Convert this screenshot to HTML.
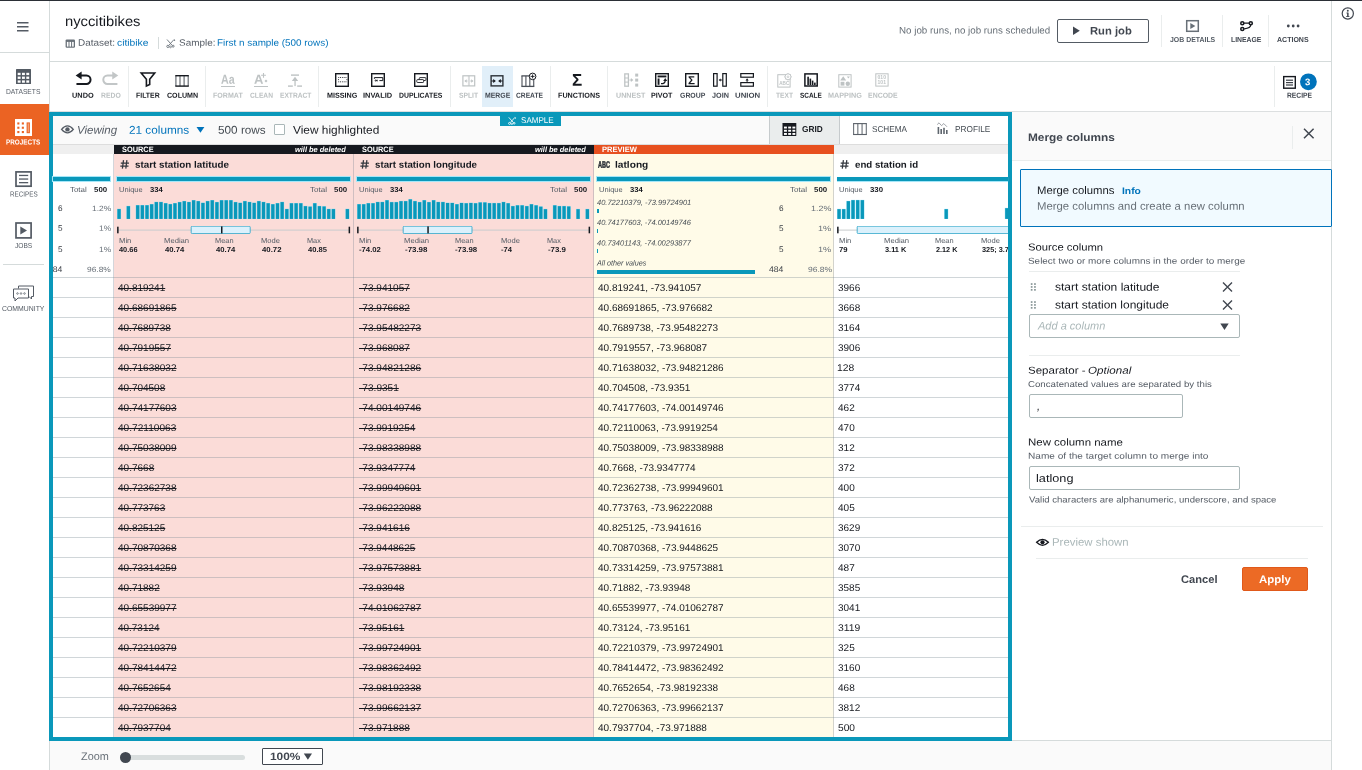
<!DOCTYPE html>
<html lang="en"><head><meta charset="utf-8"><title>nyccitibikes - AWS Glue DataBrew</title>
<style>
html,body{margin:0;padding:0}
body{width:1362px;height:770px;position:relative;overflow:hidden;background:#fff;font-family:'Liberation Sans', sans-serif;}
div,span,svg{position:absolute;box-sizing:border-box}
span{white-space:pre;transform-origin:0 0}
svg{overflow:visible}
#app{left:0;top:0;width:1362px;height:770px;background:#fff;will-change:transform;overflow:hidden}
</style></head>
<body>
<div id="app">
<div style="left:0px;top:0px;width:1362px;height:1px;background:#2b2f36;"></div>
<div style="left:49px;top:1px;width:1px;height:769px;background:#d5dbdb;"></div>
<div style="left:0px;top:52px;width:49px;height:1px;background:#d5dbdb;"></div>
<div style="left:50px;top:61px;width:1281px;height:1px;background:#d5dbdb;"></div>
<div style="left:50px;top:111px;width:1281px;height:1px;background:#dcdfe0;"></div>
<div style="left:1331px;top:1px;width:1px;height:769px;background:#d5dbdb;"></div>
<div style="left:50px;top:741px;width:1281px;height:29px;background:#fafafa;"></div>
<div style="left:50px;top:740px;width:1281px;height:1px;background:#d5dbdb;"></div>
<div style="left:1012px;top:112px;width:319px;height:48px;background:#fafafa;"></div>
<div style="left:1012px;top:160px;width:319px;height:1px;background:#eaeded;"></div>
<div style="left:49px;top:112px;width:963px;height:629px;background:#0a98ba;"></div>
<div style="left:53px;top:116px;width:955px;height:621px;background:#fff;"></div>
<div style="left:53px;top:116px;width:955px;height:28px;background:#fafafa;"></div>
<div style="left:53px;top:144px;width:955px;height:1px;background:#dddddd;"></div>
<div style="left:769px;top:116px;width:71px;height:28px;background:#eaeded;border-left:1px solid #c6cbcd;border-right:1px solid #c6cbcd;"></div>
<div style="left:840px;top:116px;width:168px;height:28px;background:#fff;"></div>
<div style="left:53px;top:145px;width:61px;height:9px;background:#efefef;"></div>
<div style="left:114px;top:145px;width:480px;height:9px;background:#16191f;"></div>
<div style="left:594px;top:145px;width:240px;height:9px;background:#e7501f;"></div>
<div style="left:834px;top:145px;width:174px;height:9px;background:#efefef;"></div>
<div style="left:114px;top:154px;width:480px;height:583px;background:#fbdcd8;"></div>
<div style="left:594px;top:154px;width:240px;height:583px;background:#fffbe8;"></div>
<div style="left:113px;top:154px;width:1px;height:583px;background:rgba(125,135,150,.34);"></div>
<div style="left:353px;top:154px;width:1px;height:583px;background:rgba(125,135,150,.34);"></div>
<div style="left:593px;top:154px;width:1px;height:583px;background:rgba(125,135,150,.34);"></div>
<div style="left:833px;top:154px;width:1px;height:583px;background:rgba(125,135,150,.34);"></div>
<div style="left:53px;top:277px;width:955px;height:1px;background:rgba(125,140,150,.36);"></div>
<div style="left:53px;top:297px;width:955px;height:1px;background:rgba(125,140,150,.36);"></div>
<div style="left:53px;top:317px;width:955px;height:1px;background:rgba(125,140,150,.36);"></div>
<div style="left:53px;top:337px;width:955px;height:1px;background:rgba(125,140,150,.36);"></div>
<div style="left:53px;top:357px;width:955px;height:1px;background:rgba(125,140,150,.36);"></div>
<div style="left:53px;top:377px;width:955px;height:1px;background:rgba(125,140,150,.36);"></div>
<div style="left:53px;top:397px;width:955px;height:1px;background:rgba(125,140,150,.36);"></div>
<div style="left:53px;top:417px;width:955px;height:1px;background:rgba(125,140,150,.36);"></div>
<div style="left:53px;top:437px;width:955px;height:1px;background:rgba(125,140,150,.36);"></div>
<div style="left:53px;top:457px;width:955px;height:1px;background:rgba(125,140,150,.36);"></div>
<div style="left:53px;top:477px;width:955px;height:1px;background:rgba(125,140,150,.36);"></div>
<div style="left:53px;top:497px;width:955px;height:1px;background:rgba(125,140,150,.36);"></div>
<div style="left:53px;top:517px;width:955px;height:1px;background:rgba(125,140,150,.36);"></div>
<div style="left:53px;top:537px;width:955px;height:1px;background:rgba(125,140,150,.36);"></div>
<div style="left:53px;top:557px;width:955px;height:1px;background:rgba(125,140,150,.36);"></div>
<div style="left:53px;top:577px;width:955px;height:1px;background:rgba(125,140,150,.36);"></div>
<div style="left:53px;top:597px;width:955px;height:1px;background:rgba(125,140,150,.36);"></div>
<div style="left:53px;top:617px;width:955px;height:1px;background:rgba(125,140,150,.36);"></div>
<div style="left:53px;top:637px;width:955px;height:1px;background:rgba(125,140,150,.36);"></div>
<div style="left:53px;top:657px;width:955px;height:1px;background:rgba(125,140,150,.36);"></div>
<div style="left:53px;top:677px;width:955px;height:1px;background:rgba(125,140,150,.36);"></div>
<div style="left:53px;top:697px;width:955px;height:1px;background:rgba(125,140,150,.36);"></div>
<div style="left:53px;top:717px;width:955px;height:1px;background:rgba(125,140,150,.36);"></div>
<div style="left:53px;top:177px;width:57px;height:4px;background:#0a98ba;box-shadow:0 0 0.5px 0.6px #a5e6f8;"></div>
<div style="left:117.25px;top:177px;width:232.75px;height:4px;background:#0a98ba;box-shadow:0 0 0.5px 0.6px #a5e6f8;"></div>
<div style="left:357.25px;top:177px;width:232.75px;height:4px;background:#0a98ba;box-shadow:0 0 0.5px 0.6px #a5e6f8;"></div>
<div style="left:597.25px;top:177px;width:232.75px;height:4px;background:#0a98ba;box-shadow:0 0 0.5px 0.6px #a5e6f8;"></div>
<div style="left:837.25px;top:177px;width:170.75px;height:4px;background:#0a98ba;box-shadow:0 -0.5px 0.6px 0 #a5e6f8,0 0.5px 0.6px 0 #a5e6f8;"></div>
<span style="left:64.55px;top:12px;font-size:14px;line-height:18px;color:#16191f;transform:matrix(1.0543,0.0005,0,1,0,0.00);">nyccitibikes</span>
<span style="left:78.20px;top:36px;font-size:9.3px;line-height:12px;color:#545b64;transform:matrix(1.0727,0.0005,0,1,0,0.80);">Dataset:</span>
<span style="left:117.47px;top:36px;font-size:9.3px;line-height:12px;color:#0073bb;transform:matrix(1.1081,0.0005,0,1,0,0.80);">citibike</span>
<div style="left:157.5px;top:37px;width:1px;height:12px;background:#d5dbdb;"></div>
<span style="left:178.87px;top:36px;font-size:9.3px;line-height:12px;color:#545b64;transform:matrix(1.0687,0.0005,0,1,0,0.80);">Sample:</span>
<span style="left:216.70px;top:36px;font-size:9.3px;line-height:12px;color:#0073bb;transform:matrix(1.0628,0.0005,0,1,0,0.80);">First n sample (500 rows)</span>
<span style="left:898.54px;top:23px;font-size:9.6px;line-height:13px;color:#687078;transform:matrix(1.0197,0.0005,0,1,0,0.40);">No job runs, no job runs scheduled</span>
<div style="left:1057px;top:19px;width:92px;height:24px;background:#fff;border:1px solid #545b64;border-radius:2px;"></div>
<span style="left:1090.03px;top:23px;font-size:11px;line-height:14px;color:#414750;font-weight:700;transform:matrix(1.0214,0.0005,0,1,0,0.50);">Run job</span>
<div style="left:1161px;top:14.5px;width:1px;height:32.5px;background:#eaeded;"></div>
<div style="left:1222px;top:14.5px;width:1px;height:32.5px;background:#eaeded;"></div>
<div style="left:1268px;top:14.5px;width:1px;height:32.5px;background:#eaeded;"></div>
<span style="left:1170.00px;top:33px;font-size:7.2px;line-height:11px;color:#545b64;font-weight:700;transform:matrix(0.9626,0.0005,0,1,0,0.90);">JOB DETAILS</span>
<span style="left:1230.77px;top:33px;font-size:7.2px;line-height:11px;color:#414750;font-weight:700;transform:matrix(0.9520,0.0005,0,1,0,0.90);">LINEAGE</span>
<span style="left:1277.26px;top:33px;font-size:7.2px;line-height:11px;color:#414750;font-weight:700;transform:matrix(0.9766,0.0005,0,1,0,0.90);">ACTIONS</span>
<div style="left:482.25px;top:66px;width:30.75px;height:41px;background:#e1eff9;"></div>
<div style="left:128px;top:66px;width:1px;height:41px;background:#eaeded;"></div>
<div style="left:205px;top:66px;width:1px;height:41px;background:#eaeded;"></div>
<div style="left:318px;top:66px;width:1px;height:41px;background:#eaeded;"></div>
<div style="left:450px;top:66px;width:1px;height:41px;background:#eaeded;"></div>
<div style="left:550px;top:66px;width:1px;height:41px;background:#eaeded;"></div>
<div style="left:607px;top:66px;width:1px;height:41px;background:#eaeded;"></div>
<div style="left:767px;top:66px;width:1px;height:41px;background:#eaeded;"></div>
<div style="left:1274px;top:66px;width:1px;height:41px;background:#eaeded;"></div>
<span style="left:72.24px;top:89px;font-size:7.2px;line-height:11px;color:#16191f;font-weight:700;transform:matrix(1.0244,0.0005,0,1,0,0.75);">UNDO</span>
<span style="left:100.53px;top:89px;font-size:7.2px;line-height:11px;color:#bcc1c2;font-weight:700;transform:matrix(0.9500,0.0005,0,1,0,0.75);">REDO</span>
<span style="left:136.42px;top:89px;font-size:7.2px;line-height:11px;color:#16191f;font-weight:700;transform:matrix(0.9625,0.0005,0,1,0,0.75);">FILTER</span>
<span style="left:166.65px;top:89px;font-size:7.2px;line-height:11px;color:#16191f;font-weight:700;transform:matrix(0.9871,0.0005,0,1,0,0.75);">COLUMN</span>
<span style="left:213.26px;top:89px;font-size:7.2px;line-height:11px;color:#bcc1c2;font-weight:700;transform:matrix(0.9832,0.0005,0,1,0,0.75);">FORMAT</span>
<span style="left:250.02px;top:89px;font-size:7.2px;line-height:11px;color:#bcc1c2;font-weight:700;transform:matrix(0.9271,0.0005,0,1,0,0.75);">CLEAN</span>
<span style="left:279.54px;top:89px;font-size:7.2px;line-height:11px;color:#bcc1c2;font-weight:700;transform:matrix(0.9254,0.0005,0,1,0,0.75);">EXTRACT</span>
<span style="left:327.25px;top:89px;font-size:7.2px;line-height:11px;color:#16191f;font-weight:700;transform:matrix(1.0000,0.0005,0,1,0,0.75);">MISSING</span>
<span style="left:363.48px;top:89px;font-size:7.2px;line-height:11px;color:#16191f;font-weight:700;transform:matrix(1.0364,0.0005,0,1,0,0.75);">INVALID</span>
<span style="left:399.27px;top:89px;font-size:7.2px;line-height:11px;color:#16191f;font-weight:700;transform:matrix(0.9553,0.0005,0,1,0,0.75);">DUPLICATES</span>
<span style="left:458.77px;top:89px;font-size:7.2px;line-height:11px;color:#bcc1c2;font-weight:700;transform:matrix(0.9383,0.0005,0,1,0,0.75);">SPLIT</span>
<span style="left:484.52px;top:89px;font-size:7.2px;line-height:11px;color:#414750;font-weight:700;transform:matrix(0.9612,0.0005,0,1,0,0.75);">MERGE</span>
<span style="left:515.77px;top:89px;font-size:7.2px;line-height:11px;color:#414750;font-weight:700;transform:matrix(0.9298,0.0005,0,1,0,0.75);">CREATE</span>
<span style="left:558.25px;top:89px;font-size:7.2px;line-height:11px;color:#16191f;font-weight:700;transform:matrix(1.0000,0.0005,0,1,0,0.75);">FUNCTIONS</span>
<span style="left:615.75px;top:89px;font-size:7.2px;line-height:11px;color:#bcc1c2;font-weight:700;transform:matrix(0.9914,0.0005,0,1,0,0.75);">UNNEST</span>
<span style="left:651.40px;top:89px;font-size:7.2px;line-height:11px;color:#16191f;font-weight:700;transform:matrix(0.9929,0.0005,0,1,0,0.75);">PIVOT</span>
<span style="left:679.76px;top:89px;font-size:7.2px;line-height:11px;color:#414750;font-weight:700;transform:matrix(0.9615,0.0005,0,1,0,0.75);">GROUP</span>
<span style="left:711.90px;top:89px;font-size:7.2px;line-height:11px;color:#414750;font-weight:700;transform:matrix(1.0062,0.0005,0,1,0,0.75);">JOIN</span>
<span style="left:734.71px;top:89px;font-size:7.2px;line-height:11px;color:#414750;font-weight:700;transform:matrix(1.0854,0.0005,0,1,0,0.75);">UNION</span>
<span style="left:775.60px;top:89px;font-size:7.2px;line-height:11px;color:#bcc1c2;font-weight:700;transform:matrix(0.9270,0.0005,0,1,0,0.75);">TEXT</span>
<span style="left:799.53px;top:89px;font-size:7.2px;line-height:11px;color:#16191f;font-weight:700;transform:matrix(0.8958,0.0005,0,1,0,0.75);">SCALE</span>
<span style="left:827.50px;top:89px;font-size:7.2px;line-height:11px;color:#bcc1c2;font-weight:700;transform:matrix(1.0076,0.0005,0,1,0,0.75);">MAPPING</span>
<span style="left:867.52px;top:89px;font-size:7.2px;line-height:11px;color:#bcc1c2;font-weight:700;transform:matrix(0.9667,0.0005,0,1,0,0.75);">ENCODE</span>
<span style="left:1287.23px;top:89px;font-size:7.2px;line-height:11px;color:#414750;font-weight:700;transform:matrix(0.9346,0.0005,0,1,0,0.75);">RECIPE</span>
<div style="left:0px;top:104px;width:49px;height:50.5px;background:#eb6323;"></div>
<span style="left:6.33px;top:85px;font-size:7.2px;line-height:11px;color:#545b64;transform:matrix(0.9333,0.0005,0,1,0,0.90);">DATASETS</span>
<span style="left:6.36px;top:136px;font-size:7.2px;line-height:11px;color:#fff;font-weight:700;transform:matrix(0.8842,0.0005,0,1,0,0.50);">PROJECTS</span>
<span style="left:9.56px;top:188px;font-size:7.2px;line-height:11px;color:#545b64;transform:matrix(0.8780,0.0005,0,1,0,0.60);">RECIPES</span>
<span style="left:15.20px;top:239px;font-size:7.2px;line-height:11px;color:#545b64;transform:matrix(0.9189,0.0005,0,1,0,0.90);">JOBS</span>
<div style="left:3px;top:263.5px;width:41px;height:1px;background:#d5dbdb;"></div>
<span style="left:2.26px;top:302px;font-size:7.2px;line-height:11px;color:#545b64;transform:matrix(0.9577,0.0005,0,1,0,0.90);">COMMUNITY</span>
<span style="left:77.48px;top:122px;font-size:11.3px;line-height:14px;color:#545b64;font-style:italic;transform:matrix(1.0196,0.0005,0,1,0,0.75);">Viewing</span>
<span style="left:129.48px;top:122px;font-size:11.3px;line-height:14px;color:#0073bb;transform:matrix(1.0421,0.0005,0,1,0,0.75);">21 columns</span>
<span style="left:218.23px;top:122px;font-size:11.3px;line-height:14px;color:#444b52;transform:matrix(1.0411,0.0005,0,1,0,0.75);">500 rows</span>
<div style="left:274px;top:124.4px;width:11.25px;height:10.6px;background:#fff;border:1px solid #aab7b8;border-radius:1px;"></div>
<span style="left:293.00px;top:122px;font-size:11.3px;line-height:14px;color:#16191f;transform:matrix(1.0521,0.0005,0,1,0,0.75);">View highlighted</span>
<div style="left:500.25px;top:116px;width:60.75px;height:10px;background:#0a98ba;"></div>
<span style="left:520.53px;top:113px;font-size:8.5px;line-height:12px;color:#fff;transform:matrix(0.9481,0.0005,0,1,0,0.90);">SAMPLE</span>
<span style="left:802.26px;top:122px;font-size:8.6px;line-height:12px;color:#16191f;font-weight:700;transform:matrix(0.9643,0.0005,0,1,0,0.90);">GRID</span>
<span style="left:872.27px;top:122px;font-size:8.6px;line-height:12px;color:#444b52;transform:matrix(0.9517,0.0005,0,1,0,0.90);">SCHEMA</span>
<span style="left:954.88px;top:122px;font-size:8.6px;line-height:12px;color:#444b52;transform:matrix(0.9622,0.0005,0,1,0,0.90);">PROFILE</span>
<span style="left:122.01px;top:143px;font-size:7.8px;line-height:11px;color:#fff;font-weight:700;transform:matrix(0.9470,0.0005,0,1,0,0.90);">SOURCE</span>
<span style="left:295.36px;top:143px;font-size:7.6px;line-height:11px;color:#fff;font-weight:700;font-style:italic;transform:matrix(0.9787,0.0005,0,1,0,0.90);">will be deleted</span>
<span style="left:362.01px;top:143px;font-size:7.8px;line-height:11px;color:#fff;font-weight:700;transform:matrix(0.9470,0.0005,0,1,0,0.90);">SOURCE</span>
<span style="left:535.36px;top:143px;font-size:7.6px;line-height:11px;color:#fff;font-weight:700;font-style:italic;transform:matrix(0.9787,0.0005,0,1,0,0.90);">will be deleted</span>
<span style="left:602.02px;top:143px;font-size:7.8px;line-height:11px;color:#fff;font-weight:700;transform:matrix(0.9690,0.0005,0,1,0,0.90);">PREVIEW</span>
<span style="left:134.99px;top:157px;font-size:9.5px;line-height:13px;color:#16191f;font-weight:700;transform:matrix(1.0360,0.0005,0,1,0,0.75);">start station latitude</span>
<span style="left:374.99px;top:157px;font-size:9.5px;line-height:13px;color:#16191f;font-weight:700;transform:matrix(1.0227,0.0005,0,1,0,0.75);">start station longitude</span>
<span style="left:614.60px;top:157px;font-size:9.5px;line-height:13px;color:#16191f;font-weight:700;transform:matrix(1.0706,0.0005,0,1,0,0.75);">latlong</span>
<span style="left:855.04px;top:157px;font-size:9.5px;line-height:13px;color:#16191f;font-weight:700;transform:matrix(1.0213,0.0005,0,1,0,0.75);">end station id</span>
<span style="left:597.85px;top:157px;font-size:9.4px;line-height:13px;color:#2a2f36;font-weight:700;transform:matrix(0.5949,0.0005,0,1,0,0.75);-webkit-text-stroke:0.5px #2a2f36;">ABC</span>
<span style="left:69.97px;top:183px;font-size:7.2px;line-height:11px;color:#545b64;transform:matrix(1.1034,0.0005,0,1,0,0.90);">Total</span>
<span style="left:94.32px;top:183px;font-size:7.2px;line-height:11px;color:#16191f;font-weight:700;transform:matrix(1.1000,0.0005,0,1,0,0.90);">500</span>
<span style="left:58.00px;top:203px;font-size:8.2px;line-height:11px;color:#3a3f46;transform:matrix(1.0000,0.0005,0,1,0,0.00);">6</span>
<span style="left:92.20px;top:203px;font-size:7.6px;line-height:11px;color:#687078;transform:matrix(1.1061,0.0005,0,1,0,0.00);">1.2%</span>
<span style="left:58.25px;top:222px;font-size:8.2px;line-height:11px;color:#3a3f46;transform:matrix(1.0000,0.0005,0,1,0,0.80);">5</span>
<span style="left:99.20px;top:222px;font-size:7.6px;line-height:11px;color:#687078;transform:matrix(1.0976,0.0005,0,1,0,0.80);">1%</span>
<span style="left:58.25px;top:243px;font-size:8.2px;line-height:11px;color:#3a3f46;transform:matrix(1.0000,0.0005,0,1,0,0.90);">5</span>
<span style="left:99.20px;top:243px;font-size:7.6px;line-height:11px;color:#687078;transform:matrix(1.0976,0.0005,0,1,0,0.90);">1%</span>
<div style="left:53px;top:262px;width:13px;height:14px;overflow:hidden"><span style="left:-4.56px;top:1px;font-size:8.2px;line-height:11px;color:#3a3f46;transform:matrix(1.0566,0.0005,0,1,0,0.90);">484</span></div>
<span style="left:87.47px;top:263px;font-size:7.6px;line-height:11px;color:#687078;transform:matrix(1.1071,0.0005,0,1,0,0.90);">96.8%</span>
<span style="left:118.88px;top:183px;font-size:7.2px;line-height:11px;color:#545b64;transform:matrix(1.0386,0.0005,0,1,0,0.90);">Unique</span>
<span style="left:150.33px;top:183px;font-size:7.2px;line-height:11px;color:#16191f;font-weight:700;transform:matrix(1.0638,0.0005,0,1,0,0.90);">334</span>
<span style="left:310.22px;top:183px;font-size:7.2px;line-height:11px;color:#545b64;transform:matrix(1.1207,0.0005,0,1,0,0.90);">Total</span>
<span style="left:334.23px;top:183px;font-size:7.2px;line-height:11px;color:#16191f;font-weight:700;transform:matrix(1.1000,0.0005,0,1,0,0.90);">500</span>
<svg style="left:114px;top:199.1px;overflow:hidden;" width="240" height="20" viewBox="0 0 240 20"><rect x="3.10" y="9.80" width="3.9" height="10.10" fill="#7fd6ee"/><rect x="3.45" y="10.10" width="3.2" height="9.80" fill="#0a98ba"/><rect x="12.42" y="6.90" width="3.9" height="13.00" fill="#7fd6ee"/><rect x="12.77" y="7.20" width="3.2" height="12.70" fill="#0a98ba"/><rect x="21.74" y="6.00" width="3.9" height="13.90" fill="#7fd6ee"/><rect x="22.09" y="6.30" width="3.2" height="13.60" fill="#0a98ba"/><rect x="26.40" y="6.00" width="3.9" height="13.90" fill="#7fd6ee"/><rect x="26.75" y="6.30" width="3.2" height="13.60" fill="#0a98ba"/><rect x="31.06" y="6.00" width="3.9" height="13.90" fill="#7fd6ee"/><rect x="31.41" y="6.30" width="3.2" height="13.60" fill="#0a98ba"/><rect x="35.72" y="5.00" width="3.9" height="14.90" fill="#7fd6ee"/><rect x="36.07" y="5.30" width="3.2" height="14.60" fill="#0a98ba"/><rect x="40.38" y="2.80" width="3.9" height="17.10" fill="#7fd6ee"/><rect x="40.73" y="3.10" width="3.2" height="16.80" fill="#0a98ba"/><rect x="45.04" y="2.80" width="3.9" height="17.10" fill="#7fd6ee"/><rect x="45.39" y="3.10" width="3.2" height="16.80" fill="#0a98ba"/><rect x="49.70" y="4.00" width="3.9" height="15.90" fill="#7fd6ee"/><rect x="50.05" y="4.30" width="3.2" height="15.60" fill="#0a98ba"/><rect x="54.36" y="4.90" width="3.9" height="15.00" fill="#7fd6ee"/><rect x="54.71" y="5.20" width="3.2" height="14.70" fill="#0a98ba"/><rect x="59.02" y="4.00" width="3.9" height="15.90" fill="#7fd6ee"/><rect x="59.37" y="4.30" width="3.2" height="15.60" fill="#0a98ba"/><rect x="63.68" y="2.90" width="3.9" height="17.00" fill="#7fd6ee"/><rect x="64.03" y="3.20" width="3.2" height="16.70" fill="#0a98ba"/><rect x="68.34" y="1.90" width="3.9" height="18.00" fill="#7fd6ee"/><rect x="68.69" y="2.20" width="3.2" height="17.70" fill="#0a98ba"/><rect x="73.00" y="2.80" width="3.9" height="17.10" fill="#7fd6ee"/><rect x="73.35" y="3.10" width="3.2" height="16.80" fill="#0a98ba"/><rect x="77.66" y="1.00" width="3.9" height="18.90" fill="#7fd6ee"/><rect x="78.01" y="1.30" width="3.2" height="18.60" fill="#0a98ba"/><rect x="82.32" y="1.90" width="3.9" height="18.00" fill="#7fd6ee"/><rect x="82.67" y="2.20" width="3.2" height="17.70" fill="#0a98ba"/><rect x="86.98" y="3.65" width="3.9" height="16.25" fill="#7fd6ee"/><rect x="87.33" y="3.95" width="3.2" height="15.95" fill="#0a98ba"/><rect x="91.64" y="1.90" width="3.9" height="18.00" fill="#7fd6ee"/><rect x="91.99" y="2.20" width="3.2" height="17.70" fill="#0a98ba"/><rect x="96.30" y="1.00" width="3.9" height="18.90" fill="#7fd6ee"/><rect x="96.65" y="1.30" width="3.2" height="18.60" fill="#0a98ba"/><rect x="100.96" y="2.90" width="3.9" height="17.00" fill="#7fd6ee"/><rect x="101.31" y="3.20" width="3.2" height="16.70" fill="#0a98ba"/><rect x="105.62" y="1.00" width="3.9" height="18.90" fill="#7fd6ee"/><rect x="105.97" y="1.30" width="3.2" height="18.60" fill="#0a98ba"/><rect x="110.28" y="1.00" width="3.9" height="18.90" fill="#7fd6ee"/><rect x="110.63" y="1.30" width="3.2" height="18.60" fill="#0a98ba"/><rect x="114.94" y="1.00" width="3.9" height="18.90" fill="#7fd6ee"/><rect x="115.29" y="1.30" width="3.2" height="18.60" fill="#0a98ba"/><rect x="119.60" y="2.90" width="3.9" height="17.00" fill="#7fd6ee"/><rect x="119.95" y="3.20" width="3.2" height="16.70" fill="#0a98ba"/><rect x="124.26" y="3.65" width="3.9" height="16.25" fill="#7fd6ee"/><rect x="124.61" y="3.95" width="3.2" height="15.95" fill="#0a98ba"/><rect x="128.92" y="1.90" width="3.9" height="18.00" fill="#7fd6ee"/><rect x="129.27" y="2.20" width="3.2" height="17.70" fill="#0a98ba"/><rect x="133.58" y="2.80" width="3.9" height="17.10" fill="#7fd6ee"/><rect x="133.93" y="3.10" width="3.2" height="16.80" fill="#0a98ba"/><rect x="138.24" y="3.65" width="3.9" height="16.25" fill="#7fd6ee"/><rect x="138.59" y="3.95" width="3.2" height="15.95" fill="#0a98ba"/><rect x="142.90" y="1.90" width="3.9" height="18.00" fill="#7fd6ee"/><rect x="143.25" y="2.20" width="3.2" height="17.70" fill="#0a98ba"/><rect x="147.56" y="2.80" width="3.9" height="17.10" fill="#7fd6ee"/><rect x="147.91" y="3.10" width="3.2" height="16.80" fill="#0a98ba"/><rect x="152.22" y="4.00" width="3.9" height="15.90" fill="#7fd6ee"/><rect x="152.57" y="4.30" width="3.2" height="15.60" fill="#0a98ba"/><rect x="156.88" y="5.00" width="3.9" height="14.90" fill="#7fd6ee"/><rect x="157.23" y="5.30" width="3.2" height="14.60" fill="#0a98ba"/><rect x="161.54" y="4.00" width="3.9" height="15.90" fill="#7fd6ee"/><rect x="161.89" y="4.30" width="3.2" height="15.60" fill="#0a98ba"/><rect x="166.20" y="2.80" width="3.9" height="17.10" fill="#7fd6ee"/><rect x="166.55" y="3.10" width="3.2" height="16.80" fill="#0a98ba"/><rect x="170.86" y="9.80" width="3.9" height="10.10" fill="#7fd6ee"/><rect x="171.21" y="10.10" width="3.2" height="9.80" fill="#0a98ba"/><rect x="175.52" y="4.00" width="3.9" height="15.90" fill="#7fd6ee"/><rect x="175.87" y="4.30" width="3.2" height="15.60" fill="#0a98ba"/><rect x="180.18" y="4.00" width="3.9" height="15.90" fill="#7fd6ee"/><rect x="180.53" y="4.30" width="3.2" height="15.60" fill="#0a98ba"/><rect x="184.84" y="4.00" width="3.9" height="15.90" fill="#7fd6ee"/><rect x="185.19" y="4.30" width="3.2" height="15.60" fill="#0a98ba"/><rect x="189.50" y="6.90" width="3.9" height="13.00" fill="#7fd6ee"/><rect x="189.85" y="7.20" width="3.2" height="12.70" fill="#0a98ba"/><rect x="194.16" y="7.40" width="3.9" height="12.50" fill="#7fd6ee"/><rect x="194.51" y="7.70" width="3.2" height="12.20" fill="#0a98ba"/><rect x="198.82" y="4.00" width="3.9" height="15.90" fill="#7fd6ee"/><rect x="199.17" y="4.30" width="3.2" height="15.60" fill="#0a98ba"/><rect x="203.48" y="6.90" width="3.9" height="13.00" fill="#7fd6ee"/><rect x="203.83" y="7.20" width="3.2" height="12.70" fill="#0a98ba"/><rect x="208.14" y="7.20" width="3.9" height="12.70" fill="#7fd6ee"/><rect x="208.49" y="7.50" width="3.2" height="12.40" fill="#0a98ba"/><rect x="212.80" y="9.80" width="3.9" height="10.10" fill="#7fd6ee"/><rect x="213.15" y="10.10" width="3.2" height="9.80" fill="#0a98ba"/><rect x="217.46" y="9.80" width="3.9" height="10.10" fill="#7fd6ee"/><rect x="217.81" y="10.10" width="3.2" height="9.80" fill="#0a98ba"/><rect x="231.44" y="9.80" width="3.9" height="10.10" fill="#7fd6ee"/><rect x="231.79" y="10.10" width="3.2" height="9.80" fill="#0a98ba"/></svg>
<svg style="left:114px;top:226.2px;overflow:hidden;" width="240" height="8" viewBox="0 0 240 8"><rect x="3.3" y="3.6" width="231.7" height="1" fill="#c9cccd"/><rect x="3.1" y="0.7" width="1.5" height="6.6" fill="#16191f"/><rect x="234.6" y="0.7" width="1.5" height="6.6" fill="#16191f"/><rect x="77.2" y="0.2" width="59" height="7.4" rx="1" fill="#dbf1fc" stroke="#35a9cc" stroke-width="0.9"/><rect x="107" y="0.4" width="1.5" height="7" fill="#16191f"/></svg>
<span style="left:118.72px;top:235px;font-size:7.2px;line-height:11px;color:#545b64;transform:matrix(1.0698,0.0005,0,1,0,0.00);">Min</span>
<span style="left:119.25px;top:244px;font-size:7.2px;line-height:11px;color:#16191f;font-weight:700;transform:matrix(1.0282,0.0005,0,1,0,0.00);">40.66</span>
<span style="left:164.47px;top:235px;font-size:7.2px;line-height:11px;color:#545b64;transform:matrix(1.0659,0.0005,0,1,0,0.00);">Median</span>
<span style="left:165.00px;top:244px;font-size:7.2px;line-height:11px;color:#16191f;font-weight:700;transform:matrix(1.0694,0.0005,0,1,0,0.00);">40.74</span>
<span style="left:215.24px;top:235px;font-size:7.2px;line-height:11px;color:#545b64;transform:matrix(1.0294,0.0005,0,1,0,0.00);">Mean</span>
<span style="left:215.75px;top:244px;font-size:7.2px;line-height:11px;color:#16191f;font-weight:700;transform:matrix(1.0694,0.0005,0,1,0,0.00);">40.74</span>
<span style="left:261.22px;top:235px;font-size:7.2px;line-height:11px;color:#545b64;transform:matrix(1.0580,0.0005,0,1,0,0.00);">Mode</span>
<span style="left:261.75px;top:244px;font-size:7.2px;line-height:11px;color:#16191f;font-weight:700;transform:matrix(1.0845,0.0005,0,1,0,0.00);">40.72</span>
<span style="left:307.49px;top:235px;font-size:7.2px;line-height:11px;color:#545b64;transform:matrix(1.0192,0.0005,0,1,0,0.00);">Max</span>
<span style="left:308.00px;top:244px;font-size:7.2px;line-height:11px;color:#16191f;font-weight:700;transform:matrix(1.0563,0.0005,0,1,0,0.00);">40.85</span>
<span style="left:358.88px;top:183px;font-size:7.2px;line-height:11px;color:#545b64;transform:matrix(1.0386,0.0005,0,1,0,0.90);">Unique</span>
<span style="left:390.33px;top:183px;font-size:7.2px;line-height:11px;color:#16191f;font-weight:700;transform:matrix(1.0638,0.0005,0,1,0,0.90);">334</span>
<span style="left:550.22px;top:183px;font-size:7.2px;line-height:11px;color:#545b64;transform:matrix(1.1207,0.0005,0,1,0,0.90);">Total</span>
<span style="left:574.23px;top:183px;font-size:7.2px;line-height:11px;color:#16191f;font-weight:700;transform:matrix(1.1000,0.0005,0,1,0,0.90);">500</span>
<svg style="left:354px;top:199.1px;overflow:hidden;" width="240" height="20" viewBox="0 0 240 20"><rect x="3.10" y="5.00" width="3.9" height="14.90" fill="#7fd6ee"/><rect x="3.45" y="5.30" width="3.2" height="14.60" fill="#0a98ba"/><rect x="7.76" y="5.00" width="3.9" height="14.90" fill="#7fd6ee"/><rect x="8.11" y="5.30" width="3.2" height="14.60" fill="#0a98ba"/><rect x="12.42" y="4.00" width="3.9" height="15.90" fill="#7fd6ee"/><rect x="12.77" y="4.30" width="3.2" height="15.60" fill="#0a98ba"/><rect x="17.08" y="4.00" width="3.9" height="15.90" fill="#7fd6ee"/><rect x="17.43" y="4.30" width="3.2" height="15.60" fill="#0a98ba"/><rect x="21.74" y="2.80" width="3.9" height="17.10" fill="#7fd6ee"/><rect x="22.09" y="3.10" width="3.2" height="16.80" fill="#0a98ba"/><rect x="26.40" y="2.80" width="3.9" height="17.10" fill="#7fd6ee"/><rect x="26.75" y="3.10" width="3.2" height="16.80" fill="#0a98ba"/><rect x="31.06" y="1.00" width="3.9" height="18.90" fill="#7fd6ee"/><rect x="31.41" y="1.30" width="3.2" height="18.60" fill="#0a98ba"/><rect x="35.72" y="2.90" width="3.9" height="17.00" fill="#7fd6ee"/><rect x="36.07" y="3.20" width="3.2" height="16.70" fill="#0a98ba"/><rect x="40.38" y="2.90" width="3.9" height="17.00" fill="#7fd6ee"/><rect x="40.73" y="3.20" width="3.2" height="16.70" fill="#0a98ba"/><rect x="45.04" y="1.90" width="3.9" height="18.00" fill="#7fd6ee"/><rect x="45.39" y="2.20" width="3.2" height="17.70" fill="#0a98ba"/><rect x="49.70" y="1.90" width="3.9" height="18.00" fill="#7fd6ee"/><rect x="50.05" y="2.20" width="3.2" height="17.70" fill="#0a98ba"/><rect x="54.36" y="0.10" width="3.9" height="19.80" fill="#7fd6ee"/><rect x="54.71" y="0.40" width="3.2" height="19.50" fill="#0a98ba"/><rect x="59.02" y="1.90" width="3.9" height="18.00" fill="#7fd6ee"/><rect x="59.37" y="2.20" width="3.2" height="17.70" fill="#0a98ba"/><rect x="63.68" y="2.90" width="3.9" height="17.00" fill="#7fd6ee"/><rect x="64.03" y="3.20" width="3.2" height="16.70" fill="#0a98ba"/><rect x="68.34" y="1.00" width="3.9" height="18.90" fill="#7fd6ee"/><rect x="68.69" y="1.30" width="3.2" height="18.60" fill="#0a98ba"/><rect x="73.00" y="2.90" width="3.9" height="17.00" fill="#7fd6ee"/><rect x="73.35" y="3.20" width="3.2" height="16.70" fill="#0a98ba"/><rect x="77.66" y="1.00" width="3.9" height="18.90" fill="#7fd6ee"/><rect x="78.01" y="1.30" width="3.2" height="18.60" fill="#0a98ba"/><rect x="82.32" y="2.80" width="3.9" height="17.10" fill="#7fd6ee"/><rect x="82.67" y="3.10" width="3.2" height="16.80" fill="#0a98ba"/><rect x="86.98" y="2.80" width="3.9" height="17.10" fill="#7fd6ee"/><rect x="87.33" y="3.10" width="3.2" height="16.80" fill="#0a98ba"/><rect x="91.64" y="3.70" width="3.9" height="16.20" fill="#7fd6ee"/><rect x="91.99" y="4.00" width="3.2" height="15.90" fill="#0a98ba"/><rect x="96.30" y="3.70" width="3.9" height="16.20" fill="#7fd6ee"/><rect x="96.65" y="4.00" width="3.2" height="15.90" fill="#0a98ba"/><rect x="100.96" y="5.00" width="3.9" height="14.90" fill="#7fd6ee"/><rect x="101.31" y="5.30" width="3.2" height="14.60" fill="#0a98ba"/><rect x="105.62" y="3.70" width="3.9" height="16.20" fill="#7fd6ee"/><rect x="105.97" y="4.00" width="3.2" height="15.90" fill="#0a98ba"/><rect x="110.28" y="4.00" width="3.9" height="15.90" fill="#7fd6ee"/><rect x="110.63" y="4.30" width="3.2" height="15.60" fill="#0a98ba"/><rect x="114.94" y="3.70" width="3.9" height="16.20" fill="#7fd6ee"/><rect x="115.29" y="4.00" width="3.2" height="15.90" fill="#0a98ba"/><rect x="119.60" y="4.00" width="3.9" height="15.90" fill="#7fd6ee"/><rect x="119.95" y="4.30" width="3.2" height="15.60" fill="#0a98ba"/><rect x="124.26" y="3.20" width="3.9" height="16.70" fill="#7fd6ee"/><rect x="124.61" y="3.50" width="3.2" height="16.40" fill="#0a98ba"/><rect x="128.92" y="3.20" width="3.9" height="16.70" fill="#7fd6ee"/><rect x="129.27" y="3.50" width="3.2" height="16.40" fill="#0a98ba"/><rect x="133.58" y="3.90" width="3.9" height="16.00" fill="#7fd6ee"/><rect x="133.93" y="4.20" width="3.2" height="15.70" fill="#0a98ba"/><rect x="138.24" y="3.90" width="3.9" height="16.00" fill="#7fd6ee"/><rect x="138.59" y="4.20" width="3.2" height="15.70" fill="#0a98ba"/><rect x="142.90" y="3.90" width="3.9" height="16.00" fill="#7fd6ee"/><rect x="143.25" y="4.20" width="3.2" height="15.70" fill="#0a98ba"/><rect x="147.56" y="2.80" width="3.9" height="17.10" fill="#7fd6ee"/><rect x="147.91" y="3.10" width="3.2" height="16.80" fill="#0a98ba"/><rect x="152.22" y="4.00" width="3.9" height="15.90" fill="#7fd6ee"/><rect x="152.57" y="4.30" width="3.2" height="15.60" fill="#0a98ba"/><rect x="156.88" y="6.90" width="3.9" height="13.00" fill="#7fd6ee"/><rect x="157.23" y="7.20" width="3.2" height="12.70" fill="#0a98ba"/><rect x="161.54" y="6.10" width="3.9" height="13.80" fill="#7fd6ee"/><rect x="161.89" y="6.40" width="3.2" height="13.50" fill="#0a98ba"/><rect x="166.20" y="6.10" width="3.9" height="13.80" fill="#7fd6ee"/><rect x="166.55" y="6.40" width="3.2" height="13.50" fill="#0a98ba"/><rect x="170.86" y="6.90" width="3.9" height="13.00" fill="#7fd6ee"/><rect x="171.21" y="7.20" width="3.2" height="12.70" fill="#0a98ba"/><rect x="175.52" y="5.00" width="3.9" height="14.90" fill="#7fd6ee"/><rect x="175.87" y="5.30" width="3.2" height="14.60" fill="#0a98ba"/><rect x="180.18" y="6.10" width="3.9" height="13.80" fill="#7fd6ee"/><rect x="180.53" y="6.40" width="3.2" height="13.50" fill="#0a98ba"/><rect x="184.84" y="7.40" width="3.9" height="12.50" fill="#7fd6ee"/><rect x="185.19" y="7.70" width="3.2" height="12.20" fill="#0a98ba"/><rect x="189.50" y="9.90" width="3.9" height="10.00" fill="#7fd6ee"/><rect x="189.85" y="10.20" width="3.2" height="9.70" fill="#0a98ba"/><rect x="198.82" y="6.10" width="3.9" height="13.80" fill="#7fd6ee"/><rect x="199.17" y="6.40" width="3.2" height="13.50" fill="#0a98ba"/><rect x="203.48" y="6.90" width="3.9" height="13.00" fill="#7fd6ee"/><rect x="203.83" y="7.20" width="3.2" height="12.70" fill="#0a98ba"/><rect x="208.14" y="6.90" width="3.9" height="13.00" fill="#7fd6ee"/><rect x="208.49" y="7.20" width="3.2" height="12.70" fill="#0a98ba"/><rect x="212.80" y="7.20" width="3.9" height="12.70" fill="#7fd6ee"/><rect x="213.15" y="7.50" width="3.2" height="12.40" fill="#0a98ba"/><rect x="222.12" y="9.90" width="3.9" height="10.00" fill="#7fd6ee"/><rect x="222.47" y="10.20" width="3.2" height="9.70" fill="#0a98ba"/><rect x="231.44" y="9.90" width="3.9" height="10.00" fill="#7fd6ee"/><rect x="231.79" y="10.20" width="3.2" height="9.70" fill="#0a98ba"/></svg>
<svg style="left:354px;top:226.2px;overflow:hidden;" width="240" height="8" viewBox="0 0 240 8"><rect x="3.3" y="3.6" width="231.7" height="1" fill="#c9cccd"/><rect x="3.1" y="0.7" width="1.5" height="6.6" fill="#16191f"/><rect x="234.6" y="0.7" width="1.5" height="6.6" fill="#16191f"/><rect x="49.2" y="0.2" width="68.8" height="7.4" rx="1" fill="#dbf1fc" stroke="#35a9cc" stroke-width="0.9"/><rect x="73.3" y="0.4" width="1.5" height="7" fill="#16191f"/></svg>
<span style="left:358.72px;top:235px;font-size:7.2px;line-height:11px;color:#545b64;transform:matrix(1.0698,0.0005,0,1,0,0.00);">Min</span>
<span style="left:358.98px;top:244px;font-size:7.2px;line-height:11px;color:#16191f;font-weight:700;transform:matrix(1.0750,0.0005,0,1,0,0.00);">-74.02</span>
<span style="left:404.47px;top:235px;font-size:7.2px;line-height:11px;color:#545b64;transform:matrix(1.0659,0.0005,0,1,0,0.00);">Median</span>
<span style="left:404.73px;top:244px;font-size:7.2px;line-height:11px;color:#16191f;font-weight:700;transform:matrix(1.1000,0.0005,0,1,0,0.00);">-73.98</span>
<span style="left:455.24px;top:235px;font-size:7.2px;line-height:11px;color:#545b64;transform:matrix(1.0294,0.0005,0,1,0,0.00);">Mean</span>
<span style="left:455.48px;top:244px;font-size:7.2px;line-height:11px;color:#16191f;font-weight:700;transform:matrix(1.0875,0.0005,0,1,0,0.00);">-73.98</span>
<span style="left:501.22px;top:235px;font-size:7.2px;line-height:11px;color:#545b64;transform:matrix(1.0580,0.0005,0,1,0,0.00);">Mode</span>
<span style="left:501.49px;top:244px;font-size:7.2px;line-height:11px;color:#16191f;font-weight:700;transform:matrix(1.0488,0.0005,0,1,0,0.00);">-74</span>
<span style="left:547.49px;top:235px;font-size:7.2px;line-height:11px;color:#545b64;transform:matrix(1.0192,0.0005,0,1,0,0.00);">Max</span>
<span style="left:547.73px;top:244px;font-size:7.2px;line-height:11px;color:#16191f;font-weight:700;transform:matrix(1.0938,0.0005,0,1,0,0.00);">-73.9</span>
<span style="left:838.88px;top:183px;font-size:7.2px;line-height:11px;color:#545b64;transform:matrix(1.0386,0.0005,0,1,0,0.90);">Unique</span>
<span style="left:870.33px;top:183px;font-size:7.2px;line-height:11px;color:#16191f;font-weight:700;transform:matrix(1.0870,0.0005,0,1,0,0.90);">330</span>
<svg style="left:834px;top:199.1px;overflow:hidden;" width="174" height="20" viewBox="0 0 174 20"><rect x="3.10" y="9.90" width="3.9" height="10.00" fill="#7fd6ee"/><rect x="3.45" y="10.20" width="3.2" height="9.70" fill="#0a98ba"/><rect x="7.76" y="9.90" width="3.9" height="10.00" fill="#7fd6ee"/><rect x="8.11" y="10.20" width="3.2" height="9.70" fill="#0a98ba"/><rect x="12.42" y="1.90" width="3.9" height="18.00" fill="#7fd6ee"/><rect x="12.77" y="2.20" width="3.2" height="17.70" fill="#0a98ba"/><rect x="17.08" y="0.90" width="3.9" height="19.00" fill="#7fd6ee"/><rect x="17.43" y="1.20" width="3.2" height="18.70" fill="#0a98ba"/><rect x="21.74" y="0.90" width="3.9" height="19.00" fill="#7fd6ee"/><rect x="22.09" y="1.20" width="3.2" height="18.70" fill="#0a98ba"/><rect x="26.40" y="0.90" width="3.9" height="19.00" fill="#7fd6ee"/><rect x="26.75" y="1.20" width="3.2" height="18.70" fill="#0a98ba"/><rect x="110.28" y="9.90" width="3.9" height="10.00" fill="#7fd6ee"/><rect x="110.63" y="10.20" width="3.2" height="9.70" fill="#0a98ba"/><rect x="170.86" y="8.90" width="3.9" height="11.00" fill="#7fd6ee"/><rect x="171.21" y="9.20" width="3.2" height="10.70" fill="#0a98ba"/></svg>
<svg style="left:834px;top:226.2px;overflow:hidden;" width="174" height="8" viewBox="0 0 174 8"><rect x="3.3" y="3.6" width="174" height="1" fill="#c9cccd"/><rect x="3.1" y="0.7" width="1.5" height="6.6" fill="#16191f"/><rect x="23.2" y="0.2" width="162.8" height="7.4" rx="1" fill="#dbf1fc" stroke="#35a9cc" stroke-width="0.9"/></svg>
<span style="left:838.72px;top:235px;font-size:7.2px;line-height:11px;color:#545b64;transform:matrix(1.0698,0.0005,0,1,0,0.00);">Min</span>
<span style="left:838.98px;top:244px;font-size:7.2px;line-height:11px;color:#16191f;font-weight:700;transform:matrix(1.0667,0.0005,0,1,0,0.00);">79</span>
<span style="left:884.47px;top:235px;font-size:7.2px;line-height:11px;color:#545b64;transform:matrix(1.0659,0.0005,0,1,0,0.00);">Median</span>
<span style="left:884.74px;top:244px;font-size:7.2px;line-height:11px;color:#16191f;font-weight:700;transform:matrix(1.0244,0.0005,0,1,0,0.00);">3.11 K</span>
<span style="left:935.24px;top:235px;font-size:7.2px;line-height:11px;color:#545b64;transform:matrix(1.0294,0.0005,0,1,0,0.00);">Mean</span>
<span style="left:935.50px;top:244px;font-size:7.2px;line-height:11px;color:#16191f;font-weight:700;transform:matrix(1.0120,0.0005,0,1,0,0.00);">2.12 K</span>
<span style="left:981.22px;top:235px;font-size:7.2px;line-height:11px;color:#545b64;transform:matrix(1.0580,0.0005,0,1,0,0.00);">Mode</span>
<div style="left:980px;top:244px;width:28px;height:12px;overflow:hidden"><span style="left:1.50px;top:0px;font-size:7.2px;line-height:11px;color:#16191f;font-weight:700;transform:matrix(1.0167,0.0005,0,1,0,0.00);">325; 3.73</span></div>
<span style="left:598.88px;top:183px;font-size:7.2px;line-height:11px;color:#545b64;transform:matrix(1.0386,0.0005,0,1,0,0.90);">Unique</span>
<span style="left:630.33px;top:183px;font-size:7.2px;line-height:11px;color:#16191f;font-weight:700;transform:matrix(1.0638,0.0005,0,1,0,0.90);">334</span>
<span style="left:790.22px;top:183px;font-size:7.2px;line-height:11px;color:#545b64;transform:matrix(1.1207,0.0005,0,1,0,0.90);">Total</span>
<span style="left:814.23px;top:183px;font-size:7.2px;line-height:11px;color:#16191f;font-weight:700;transform:matrix(1.1000,0.0005,0,1,0,0.90);">500</span>
<span style="left:597.00px;top:197px;font-size:7.6px;line-height:11px;color:#444b52;font-style:italic;transform:matrix(0.9879,0.0005,0,1,0,0.00);">40.72210379, -73.99724901</span>
<span style="left:597.00px;top:217px;font-size:7.6px;line-height:11px;color:#444b52;font-style:italic;transform:matrix(0.9843,0.0005,0,1,0,0.00);">40.74177603, -74.00149746</span>
<span style="left:597.00px;top:237px;font-size:7.6px;line-height:11px;color:#444b52;font-style:italic;transform:matrix(0.9895,0.0005,0,1,0,0.40);">40.73401143, -74.00293877</span>
<span style="left:597.24px;top:257px;font-size:7.6px;line-height:11px;color:#444b52;font-style:italic;transform:matrix(0.9500,0.0005,0,1,0,0.40);">All other values</span>
<div style="left:597px;top:209px;width:2px;height:4px;background:#0a98ba;"></div>
<div style="left:597px;top:229px;width:1.4px;height:4px;background:#0a98ba;"></div>
<div style="left:597px;top:249px;width:1.4px;height:4px;background:#0a98ba;"></div>
<div style="left:597px;top:269.5px;width:158px;height:4px;background:#0a98ba;"></div>
<span style="left:778.75px;top:203px;font-size:8.2px;line-height:11px;color:#3a3f46;transform:matrix(1.0000,0.0005,0,1,0,0.00);">6</span>
<span style="left:811.41px;top:203px;font-size:7.6px;line-height:11px;color:#687078;transform:matrix(1.1758,0.0005,0,1,0,0.00);">1.2%</span>
<span style="left:778.75px;top:223px;font-size:8.2px;line-height:11px;color:#3a3f46;transform:matrix(1.0000,0.0005,0,1,0,0.00);">5</span>
<span style="left:818.40px;top:223px;font-size:7.6px;line-height:11px;color:#687078;transform:matrix(1.2098,0.0005,0,1,0,0.00);">1%</span>
<span style="left:778.75px;top:244px;font-size:8.2px;line-height:11px;color:#3a3f46;transform:matrix(1.0000,0.0005,0,1,0,0.00);">5</span>
<span style="left:818.40px;top:244px;font-size:7.6px;line-height:11px;color:#687078;transform:matrix(1.2098,0.0005,0,1,0,0.00);">1%</span>
<span style="left:768.74px;top:264px;font-size:8.2px;line-height:11px;color:#3a3f46;transform:matrix(1.0566,0.0005,0,1,0,0.00);">484</span>
<span style="left:807.52px;top:264px;font-size:7.6px;line-height:11px;color:#687078;transform:matrix(1.1238,0.0005,0,1,0,0.00);">96.8%</span>
<span style="left:118.25px;top:281px;font-size:9.8px;line-height:13px;color:#16191f;transform:matrix(1.0199,0.0005,0,1,0,0.00);text-decoration:line-through;">40.819241</span>
<span style="left:358.79px;top:281px;font-size:9.8px;line-height:13px;color:#16191f;transform:matrix(1.0256,0.0005,0,1,0,0.00);text-decoration:line-through;">-73.941057</span>
<span style="left:597.54px;top:281px;font-size:9.8px;line-height:13px;color:#16191f;transform:matrix(1.0204,0.0005,0,1,0,0.00);">40.819241, -73.941057</span>
<span style="left:837.95px;top:281px;font-size:9.8px;line-height:13px;color:#16191f;transform:matrix(1.0184,0.0005,0,1,0,0.00);">3966</span>
<span style="left:118.24px;top:301px;font-size:9.8px;line-height:13px;color:#16191f;transform:matrix(1.0227,0.0005,0,1,0,0.00);text-decoration:line-through;">40.68691865</span>
<span style="left:358.79px;top:301px;font-size:9.8px;line-height:13px;color:#16191f;transform:matrix(1.0256,0.0005,0,1,0,0.00);text-decoration:line-through;">-73.976682</span>
<span style="left:597.54px;top:301px;font-size:9.8px;line-height:13px;color:#16191f;transform:matrix(1.0218,0.0005,0,1,0,0.00);">40.68691865, -73.976682</span>
<span style="left:837.95px;top:301px;font-size:9.8px;line-height:13px;color:#16191f;transform:matrix(1.0184,0.0005,0,1,0,0.00);">3668</span>
<span style="left:118.25px;top:321px;font-size:9.8px;line-height:13px;color:#16191f;transform:matrix(1.0189,0.0005,0,1,0,0.00);text-decoration:line-through;">40.7689738</span>
<span style="left:358.79px;top:321px;font-size:9.8px;line-height:13px;color:#16191f;transform:matrix(1.0272,0.0005,0,1,0,0.00);text-decoration:line-through;">-73.95482273</span>
<span style="left:597.54px;top:321px;font-size:9.8px;line-height:13px;color:#16191f;transform:matrix(1.0213,0.0005,0,1,0,0.00);">40.7689738, -73.95482273</span>
<span style="left:837.95px;top:321px;font-size:9.8px;line-height:13px;color:#16191f;transform:matrix(1.0184,0.0005,0,1,0,0.00);">3164</span>
<span style="left:118.24px;top:341px;font-size:9.8px;line-height:13px;color:#16191f;transform:matrix(1.0239,0.0005,0,1,0,0.00);text-decoration:line-through;">40.7919557</span>
<span style="left:358.79px;top:341px;font-size:9.8px;line-height:13px;color:#16191f;transform:matrix(1.0256,0.0005,0,1,0,0.00);text-decoration:line-through;">-73.968087</span>
<span style="left:597.54px;top:341px;font-size:9.8px;line-height:13px;color:#16191f;transform:matrix(1.0224,0.0005,0,1,0,0.00);">40.7919557, -73.968087</span>
<span style="left:837.95px;top:341px;font-size:9.8px;line-height:13px;color:#16191f;transform:matrix(1.0184,0.0005,0,1,0,0.00);">3906</span>
<span style="left:118.24px;top:361px;font-size:9.8px;line-height:13px;color:#16191f;transform:matrix(1.0227,0.0005,0,1,0,0.00);text-decoration:line-through;">40.71638032</span>
<span style="left:358.79px;top:361px;font-size:9.8px;line-height:13px;color:#16191f;transform:matrix(1.0272,0.0005,0,1,0,0.00);text-decoration:line-through;">-73.94821286</span>
<span style="left:597.54px;top:361px;font-size:9.8px;line-height:13px;color:#16191f;transform:matrix(1.0208,0.0005,0,1,0,0.00);">40.71638032, -73.94821286</span>
<span style="left:837.41px;top:361px;font-size:9.8px;line-height:13px;color:#16191f;transform:matrix(1.0544,0.0005,0,1,0,0.00);">128</span>
<span style="left:118.25px;top:381px;font-size:9.8px;line-height:13px;color:#16191f;transform:matrix(1.0199,0.0005,0,1,0,0.00);text-decoration:line-through;">40.704508</span>
<span style="left:358.79px;top:381px;font-size:9.8px;line-height:13px;color:#16191f;transform:matrix(1.0299,0.0005,0,1,0,0.00);text-decoration:line-through;">-73.9351</span>
<span style="left:597.54px;top:381px;font-size:9.8px;line-height:13px;color:#16191f;transform:matrix(1.0216,0.0005,0,1,0,0.00);">40.704508, -73.9351</span>
<span style="left:837.95px;top:381px;font-size:9.8px;line-height:13px;color:#16191f;transform:matrix(1.0184,0.0005,0,1,0,0.00);">3774</span>
<span style="left:118.24px;top:401px;font-size:9.8px;line-height:13px;color:#16191f;transform:matrix(1.0227,0.0005,0,1,0,0.00);text-decoration:line-through;">40.74177603</span>
<span style="left:358.79px;top:401px;font-size:9.8px;line-height:13px;color:#16191f;transform:matrix(1.0272,0.0005,0,1,0,0.00);text-decoration:line-through;">-74.00149746</span>
<span style="left:597.54px;top:401px;font-size:9.8px;line-height:13px;color:#16191f;transform:matrix(1.0208,0.0005,0,1,0,0.00);">40.74177603, -74.00149746</span>
<span style="left:837.94px;top:401px;font-size:9.8px;line-height:13px;color:#16191f;transform:matrix(1.0210,0.0005,0,1,0,0.00);">462</span>
<span style="left:118.24px;top:421px;font-size:9.8px;line-height:13px;color:#16191f;transform:matrix(1.0318,0.0005,0,1,0,0.00);text-decoration:line-through;">40.72110063</span>
<span style="left:358.79px;top:421px;font-size:9.8px;line-height:13px;color:#16191f;transform:matrix(1.0241,0.0005,0,1,0,0.00);text-decoration:line-through;">-73.9919254</span>
<span style="left:597.54px;top:421px;font-size:9.8px;line-height:13px;color:#16191f;transform:matrix(1.0257,0.0005,0,1,0,0.00);">40.72110063, -73.9919254</span>
<span style="left:837.94px;top:421px;font-size:9.8px;line-height:13px;color:#16191f;transform:matrix(1.0210,0.0005,0,1,0,0.00);">470</span>
<span style="left:118.24px;top:441px;font-size:9.8px;line-height:13px;color:#16191f;transform:matrix(1.0227,0.0005,0,1,0,0.00);text-decoration:line-through;">40.75038009</span>
<span style="left:358.79px;top:441px;font-size:9.8px;line-height:13px;color:#16191f;transform:matrix(1.0272,0.0005,0,1,0,0.00);text-decoration:line-through;">-73.98338988</span>
<span style="left:597.54px;top:441px;font-size:9.8px;line-height:13px;color:#16191f;transform:matrix(1.0208,0.0005,0,1,0,0.00);">40.75038009, -73.98338988</span>
<span style="left:837.94px;top:441px;font-size:9.8px;line-height:13px;color:#16191f;transform:matrix(1.0210,0.0005,0,1,0,0.00);">312</span>
<span style="left:118.24px;top:461px;font-size:9.8px;line-height:13px;color:#16191f;transform:matrix(1.0227,0.0005,0,1,0,0.00);text-decoration:line-through;">40.7668</span>
<span style="left:358.79px;top:461px;font-size:9.8px;line-height:13px;color:#16191f;transform:matrix(1.0241,0.0005,0,1,0,0.00);text-decoration:line-through;">-73.9347774</span>
<span style="left:597.55px;top:461px;font-size:9.8px;line-height:13px;color:#16191f;transform:matrix(1.0183,0.0005,0,1,0,0.00);">40.7668, -73.9347774</span>
<span style="left:837.94px;top:461px;font-size:9.8px;line-height:13px;color:#16191f;transform:matrix(1.0210,0.0005,0,1,0,0.00);">372</span>
<span style="left:118.24px;top:481px;font-size:9.8px;line-height:13px;color:#16191f;transform:matrix(1.0227,0.0005,0,1,0,0.00);text-decoration:line-through;">40.72362738</span>
<span style="left:358.79px;top:481px;font-size:9.8px;line-height:13px;color:#16191f;transform:matrix(1.0272,0.0005,0,1,0,0.00);text-decoration:line-through;">-73.99949601</span>
<span style="left:597.54px;top:481px;font-size:9.8px;line-height:13px;color:#16191f;transform:matrix(1.0208,0.0005,0,1,0,0.00);">40.72362738, -73.99949601</span>
<span style="left:837.94px;top:481px;font-size:9.8px;line-height:13px;color:#16191f;transform:matrix(1.0210,0.0005,0,1,0,0.00);">400</span>
<span style="left:118.25px;top:501px;font-size:9.8px;line-height:13px;color:#16191f;transform:matrix(1.0199,0.0005,0,1,0,0.00);text-decoration:line-through;">40.773763</span>
<span style="left:358.79px;top:501px;font-size:9.8px;line-height:13px;color:#16191f;transform:matrix(1.0272,0.0005,0,1,0,0.00);text-decoration:line-through;">-73.96222088</span>
<span style="left:597.54px;top:501px;font-size:9.8px;line-height:13px;color:#16191f;transform:matrix(1.0218,0.0005,0,1,0,0.00);">40.773763, -73.96222088</span>
<span style="left:837.94px;top:501px;font-size:9.8px;line-height:13px;color:#16191f;transform:matrix(1.0210,0.0005,0,1,0,0.00);">405</span>
<span style="left:118.25px;top:521px;font-size:9.8px;line-height:13px;color:#16191f;transform:matrix(1.0199,0.0005,0,1,0,0.00);text-decoration:line-through;">40.825125</span>
<span style="left:358.79px;top:521px;font-size:9.8px;line-height:13px;color:#16191f;transform:matrix(1.0256,0.0005,0,1,0,0.00);text-decoration:line-through;">-73.941616</span>
<span style="left:597.54px;top:521px;font-size:9.8px;line-height:13px;color:#16191f;transform:matrix(1.0204,0.0005,0,1,0,0.00);">40.825125, -73.941616</span>
<span style="left:837.95px;top:521px;font-size:9.8px;line-height:13px;color:#16191f;transform:matrix(1.0184,0.0005,0,1,0,0.00);">3629</span>
<span style="left:118.24px;top:541px;font-size:9.8px;line-height:13px;color:#16191f;transform:matrix(1.0227,0.0005,0,1,0,0.00);text-decoration:line-through;">40.70870368</span>
<span style="left:358.79px;top:541px;font-size:9.8px;line-height:13px;color:#16191f;transform:matrix(1.0241,0.0005,0,1,0,0.00);text-decoration:line-through;">-73.9448625</span>
<span style="left:597.54px;top:541px;font-size:9.8px;line-height:13px;color:#16191f;transform:matrix(1.0213,0.0005,0,1,0,0.00);">40.70870368, -73.9448625</span>
<span style="left:837.95px;top:541px;font-size:9.8px;line-height:13px;color:#16191f;transform:matrix(1.0184,0.0005,0,1,0,0.00);">3070</span>
<span style="left:118.24px;top:561px;font-size:9.8px;line-height:13px;color:#16191f;transform:matrix(1.0227,0.0005,0,1,0,0.00);text-decoration:line-through;">40.73314259</span>
<span style="left:358.79px;top:561px;font-size:9.8px;line-height:13px;color:#16191f;transform:matrix(1.0272,0.0005,0,1,0,0.00);text-decoration:line-through;">-73.97573881</span>
<span style="left:597.54px;top:561px;font-size:9.8px;line-height:13px;color:#16191f;transform:matrix(1.0208,0.0005,0,1,0,0.00);">40.73314259, -73.97573881</span>
<span style="left:837.94px;top:561px;font-size:9.8px;line-height:13px;color:#16191f;transform:matrix(1.0210,0.0005,0,1,0,0.00);">487</span>
<span style="left:118.24px;top:581px;font-size:9.8px;line-height:13px;color:#16191f;transform:matrix(1.0211,0.0005,0,1,0,0.00);text-decoration:line-through;">40.71882</span>
<span style="left:358.79px;top:581px;font-size:9.8px;line-height:13px;color:#16191f;transform:matrix(1.0275,0.0005,0,1,0,0.00);text-decoration:line-through;">-73.93948</span>
<span style="left:597.54px;top:581px;font-size:9.8px;line-height:13px;color:#16191f;transform:matrix(1.0216,0.0005,0,1,0,0.00);">40.71882, -73.93948</span>
<span style="left:837.95px;top:581px;font-size:9.8px;line-height:13px;color:#16191f;transform:matrix(1.0184,0.0005,0,1,0,0.00);">3585</span>
<span style="left:118.24px;top:601px;font-size:9.8px;line-height:13px;color:#16191f;transform:matrix(1.0227,0.0005,0,1,0,0.00);text-decoration:line-through;">40.65539977</span>
<span style="left:358.79px;top:601px;font-size:9.8px;line-height:13px;color:#16191f;transform:matrix(1.0272,0.0005,0,1,0,0.00);text-decoration:line-through;">-74.01062787</span>
<span style="left:597.54px;top:601px;font-size:9.8px;line-height:13px;color:#16191f;transform:matrix(1.0208,0.0005,0,1,0,0.00);">40.65539977, -74.01062787</span>
<span style="left:837.95px;top:601px;font-size:9.8px;line-height:13px;color:#16191f;transform:matrix(1.0184,0.0005,0,1,0,0.00);">3041</span>
<span style="left:118.25px;top:621px;font-size:9.8px;line-height:13px;color:#16191f;transform:matrix(1.0148,0.0005,0,1,0,0.00);text-decoration:line-through;">40.73124</span>
<span style="left:358.79px;top:621px;font-size:9.8px;line-height:13px;color:#16191f;transform:matrix(1.0275,0.0005,0,1,0,0.00);text-decoration:line-through;">-73.95161</span>
<span style="left:597.54px;top:621px;font-size:9.8px;line-height:13px;color:#16191f;transform:matrix(1.0216,0.0005,0,1,0,0.00);">40.73124, -73.95161</span>
<span style="left:837.94px;top:621px;font-size:9.8px;line-height:13px;color:#16191f;transform:matrix(1.0556,0.0005,0,1,0,0.00);">3119</span>
<span style="left:118.24px;top:641px;font-size:9.8px;line-height:13px;color:#16191f;transform:matrix(1.0227,0.0005,0,1,0,0.00);text-decoration:line-through;">40.72210379</span>
<span style="left:358.79px;top:641px;font-size:9.8px;line-height:13px;color:#16191f;transform:matrix(1.0272,0.0005,0,1,0,0.00);text-decoration:line-through;">-73.99724901</span>
<span style="left:597.54px;top:641px;font-size:9.8px;line-height:13px;color:#16191f;transform:matrix(1.0208,0.0005,0,1,0,0.00);">40.72210379, -73.99724901</span>
<span style="left:837.94px;top:641px;font-size:9.8px;line-height:13px;color:#16191f;transform:matrix(1.0210,0.0005,0,1,0,0.00);">325</span>
<span style="left:118.24px;top:661px;font-size:9.8px;line-height:13px;color:#16191f;transform:matrix(1.0227,0.0005,0,1,0,0.00);text-decoration:line-through;">40.78414472</span>
<span style="left:358.79px;top:661px;font-size:9.8px;line-height:13px;color:#16191f;transform:matrix(1.0272,0.0005,0,1,0,0.00);text-decoration:line-through;">-73.98362492</span>
<span style="left:597.54px;top:661px;font-size:9.8px;line-height:13px;color:#16191f;transform:matrix(1.0208,0.0005,0,1,0,0.00);">40.78414472, -73.98362492</span>
<span style="left:837.95px;top:661px;font-size:9.8px;line-height:13px;color:#16191f;transform:matrix(1.0184,0.0005,0,1,0,0.00);">3160</span>
<span style="left:118.25px;top:681px;font-size:9.8px;line-height:13px;color:#16191f;transform:matrix(1.0189,0.0005,0,1,0,0.00);text-decoration:line-through;">40.7652654</span>
<span style="left:358.79px;top:681px;font-size:9.8px;line-height:13px;color:#16191f;transform:matrix(1.0272,0.0005,0,1,0,0.00);text-decoration:line-through;">-73.98192338</span>
<span style="left:597.54px;top:681px;font-size:9.8px;line-height:13px;color:#16191f;transform:matrix(1.0213,0.0005,0,1,0,0.00);">40.7652654, -73.98192338</span>
<span style="left:837.94px;top:681px;font-size:9.8px;line-height:13px;color:#16191f;transform:matrix(1.0210,0.0005,0,1,0,0.00);">468</span>
<span style="left:118.24px;top:701px;font-size:9.8px;line-height:13px;color:#16191f;transform:matrix(1.0227,0.0005,0,1,0,0.00);text-decoration:line-through;">40.72706363</span>
<span style="left:358.79px;top:701px;font-size:9.8px;line-height:13px;color:#16191f;transform:matrix(1.0272,0.0005,0,1,0,0.00);text-decoration:line-through;">-73.99662137</span>
<span style="left:597.54px;top:701px;font-size:9.8px;line-height:13px;color:#16191f;transform:matrix(1.0208,0.0005,0,1,0,0.00);">40.72706363, -73.99662137</span>
<span style="left:837.95px;top:701px;font-size:9.8px;line-height:13px;color:#16191f;transform:matrix(1.0184,0.0005,0,1,0,0.00);">3812</span>
<span style="left:118.25px;top:721px;font-size:9.8px;line-height:13px;color:#16191f;transform:matrix(1.0189,0.0005,0,1,0,0.00);text-decoration:line-through;">40.7937704</span>
<span style="left:358.79px;top:721px;font-size:9.8px;line-height:13px;color:#16191f;transform:matrix(1.0256,0.0005,0,1,0,0.00);text-decoration:line-through;">-73.971888</span>
<span style="left:597.55px;top:721px;font-size:9.8px;line-height:13px;color:#16191f;transform:matrix(1.0200,0.0005,0,1,0,0.00);">40.7937704, -73.971888</span>
<span style="left:837.68px;top:721px;font-size:9.8px;line-height:13px;color:#16191f;transform:matrix(1.0374,0.0005,0,1,0,0.00);">500</span>
<span style="left:1027.94px;top:130px;font-size:11px;line-height:14px;color:#414750;font-weight:700;transform:matrix(1.0774,0.0005,0,1,0,0.00);">Merge columns</span>
<div style="left:1291.5px;top:125.5px;width:1px;height:23px;background:#eaeded;"></div>
<div style="left:1020.25px;top:169px;width:311.5px;height:57.5px;background:#f1faff;border:1px solid #0073bb;border-radius:1px;"></div>
<span style="left:1036.98px;top:183px;font-size:11px;line-height:14px;color:#16191f;transform:matrix(1.0304,0.0005,0,1,0,0.00);">Merge columns</span>
<span style="left:1122.20px;top:184px;font-size:9.4px;line-height:13px;color:#0073bb;font-weight:700;transform:matrix(1.0985,0.0005,0,1,0,0.00);">Info</span>
<span style="left:1036.73px;top:198px;font-size:11px;line-height:14px;color:#687078;transform:matrix(1.0323,0.0005,0,1,0,0.75);">Merge columns and create a new column</span>
<span style="left:1027.95px;top:240px;font-size:10.2px;line-height:13px;color:#16191f;transform:matrix(1.1045,0.0005,0,1,0,0.60);">Source column</span>
<span style="left:1027.92px;top:254px;font-size:8.6px;line-height:12px;color:#545b64;transform:matrix(1.1541,0.0005,0,1,0,0.75);">Select two or more columns in the order to merge</span>
<div style="left:1028.5px;top:271px;width:211.25px;height:1px;background:#eaeded;"></div>
<span style="left:1055.33px;top:279px;font-size:11px;line-height:14px;color:#16191f;transform:matrix(1.0955,0.0005,0,1,0,0.60);">start station latitude</span>
<span style="left:1055.33px;top:297px;font-size:11px;line-height:14px;color:#16191f;transform:matrix(1.0906,0.0005,0,1,0,0.50);">start station longitude</span>
<div style="left:1028.5px;top:314px;width:211.25px;height:24px;background:#fff;border:1px solid #aab7b8;border-radius:2px;"></div>
<span style="left:1037.75px;top:318px;font-size:11px;line-height:14px;color:#aab7b8;font-style:italic;transform:matrix(1.0015,0.0005,0,1,0,0.40);">Add a column</span>
<div style="left:1028.5px;top:354.5px;width:211.25px;height:1px;background:#eaeded;"></div>
<span style="left:1027.93px;top:363px;font-size:10.2px;line-height:13px;color:#16191f;transform:matrix(1.1300,0.0005,0,1,0,0.75);">Separator -</span>
<span style="left:1087.93px;top:363px;font-size:10.2px;line-height:13px;color:#16191f;font-style:italic;transform:matrix(1.1391,0.0005,0,1,0,0.75);">Optional</span>
<span style="left:1027.94px;top:377px;font-size:8.6px;line-height:12px;color:#545b64;transform:matrix(1.1255,0.0005,0,1,0,0.90);">Concatenated values are separated by this</span>
<div style="left:1028.5px;top:394px;width:154.1px;height:24px;background:#fff;border:1px solid #aab7b8;border-radius:2px;"></div>
<span style="left:1037.00px;top:399px;font-size:11px;line-height:14px;color:#16191f;font-style:italic;transform:matrix(1.0000,0.0005,0,1,0,0.00);">,</span>
<span style="left:1027.66px;top:435px;font-size:10.2px;line-height:13px;color:#16191f;transform:matrix(1.1243,0.0005,0,1,0,0.60);">New column name</span>
<span style="left:1027.62px;top:449px;font-size:8.6px;line-height:12px;color:#545b64;transform:matrix(1.1732,0.0005,0,1,0,0.75);">Name of the target column to merge into</span>
<div style="left:1028.5px;top:466px;width:211.25px;height:24px;background:#fff;border:1px solid #aab7b8;border-radius:2px;"></div>
<span style="left:1036.38px;top:470px;font-size:11px;line-height:14px;color:#16191f;transform:matrix(1.1565,0.0005,0,1,0,0.90);">latlong</span>
<span style="left:1028.50px;top:493px;font-size:8.6px;line-height:12px;color:#545b64;transform:matrix(1.1148,0.0005,0,1,0,0.50);">Valid characters are alphanumeric, underscore, and space</span>
<div style="left:1020.5px;top:526px;width:302.5px;height:1px;background:#eaeded;"></div>
<span style="left:1052.12px;top:534px;font-size:11px;line-height:14px;color:#aab7b8;transform:matrix(1.0359,0.0005,0,1,0,0.80);">Preview shown</span>
<div style="left:1036px;top:557.7px;width:271.8px;height:1px;background:#eaeded;"></div>
<span style="left:1181.19px;top:572px;font-size:11px;line-height:14px;color:#414750;font-weight:700;transform:matrix(1.0129,0.0005,0,1,0,0.00);">Cancel</span>
<div style="left:1242px;top:567px;width:65.8px;height:23.6px;background:#ec6a25;border:1px solid #e0591a;border-radius:2px;"></div>
<span style="left:1258.94px;top:572px;font-size:11px;line-height:14px;color:#fff;font-weight:700;transform:matrix(1.0413,0.0005,0,1,0,0.00);">Apply</span>
<span style="left:81.00px;top:749px;font-size:11px;line-height:14px;color:#687078;transform:matrix(0.9908,0.0005,0,1,0,0.00);">Zoom</span>
<div style="left:120px;top:755px;width:125px;height:4.5px;background:#d9dede;border-radius:2.5px;"></div>
<div style="left:120px;top:751.5px;width:11px;height:11px;background:#414750;border-radius:50%;"></div>
<div style="left:261.5px;top:747.5px;width:61.5px;height:17px;background:#fff;border:1px solid #414750;border-radius:1px;"></div>
<span style="left:270.41px;top:749px;font-size:10.6px;line-height:14px;color:#414750;font-weight:700;transform:matrix(1.1238,0.0005,0,1,0,0.00);">100%</span>
<svg style="left:0;top:0;" width="1362" height="770" viewBox="0 0 1362 770" fill="none"><rect x="17" y="22" width="11.5" height="1.5" fill="#545b64"/><rect x="17" y="26" width="11.5" height="1.5" fill="#545b64"/><rect x="17" y="30" width="11.5" height="1.5" fill="#545b64"/><rect x="16" y="69" width="15" height="15" fill="#545b64" rx="0.5"/><rect x="17.7" y="72.8" width="2.9" height="2.3" fill="#fff"/><rect x="17.7" y="76.6" width="2.9" height="2.3" fill="#fff"/><rect x="17.7" y="80.4" width="2.9" height="2.3" fill="#fff"/><rect x="22" y="72.8" width="2.9" height="2.3" fill="#fff"/><rect x="22" y="76.6" width="2.9" height="2.3" fill="#fff"/><rect x="22" y="80.4" width="2.9" height="2.3" fill="#fff"/><rect x="26.3" y="72.8" width="2.9" height="2.3" fill="#fff"/><rect x="26.3" y="76.6" width="2.9" height="2.3" fill="#fff"/><rect x="26.3" y="80.4" width="2.9" height="2.3" fill="#fff"/><rect x="15" y="119" width="17" height="17" fill="#fff"/><rect x="17.3" y="122.4" width="2.1" height="2.1" fill="#eb6323"/><rect x="17.3" y="126.7" width="2.1" height="2.1" fill="#eb6323"/><rect x="17.3" y="131" width="2.1" height="2.1" fill="#eb6323"/><rect x="21.8" y="122.4" width="2.1" height="2.1" fill="#eb6323"/><rect x="21.8" y="126.7" width="2.1" height="2.1" fill="#eb6323"/><rect x="21.8" y="131" width="2.1" height="2.1" fill="#eb6323"/><rect x="26.6" y="122.4" width="3.3" height="10.8" fill="#eb6323"/><rect x="27.7" y="123.4" width="1.1" height="8.8" fill="#f6b08d"/><rect x="16" y="171.9" width="15.1" height="14.3" stroke="#545b64" stroke-width="1.7" fill="none"/><rect x="19" y="174.8" width="9.2" height="1.3" fill="#545b64"/><rect x="19" y="178.4" width="9.2" height="1.3" fill="#545b64"/><rect x="19" y="182" width="9.2" height="1.3" fill="#545b64"/><rect x="16" y="223" width="15.1" height="14.9" stroke="#545b64" stroke-width="1.7" fill="none"/><polygon points="20.3,226.4 20.3,234.4 27,230.4" fill="#545b64"/><path d="M18.5 288.5 V286 H33.5 V296.5 H31.5 V299 L29 296.5" stroke="#545b64" stroke-width="1" fill="none" /><path d="M13.5 289 H28.5 V298 H18 L15 301 V298 H13.5 Z" stroke="#545b64" stroke-width="1" fill="#fff" /><circle cx="17.5" cy="293.5" r="0.8" stroke="#545b64" stroke-width="0.7" fill="none"/><circle cx="21" cy="293.5" r="0.8" stroke="#545b64" stroke-width="0.7" fill="none"/><circle cx="24.5" cy="293.5" r="0.8" stroke="#545b64" stroke-width="0.7" fill="none"/><rect x="65.6" y="39.4" width="9.4" height="8.4" fill="#687078" rx="1.2"/><rect x="66.9" y="41.9" width="1.6" height="4.7" fill="#fff"/><rect x="69.5" y="41.9" width="1.6" height="4.7" fill="#fff"/><rect x="72.1" y="41.9" width="1.6" height="4.7" fill="#fff"/><path d="M167.0 39.5 L172.2 45.4 M174.0 39.5 L168.8 45.4 M174.0 39.5 q1.1 0.3 0.5 1.5" stroke="#687078" stroke-width="0.9" fill="none" /><circle cx="167.9" cy="46.4" r="1.15" stroke="#687078" stroke-width="0.9" fill="none"/><circle cx="173.1" cy="46.2" r="1" stroke="#687078" stroke-width="0.9" fill="none"/><circle cx="170.5" cy="46.9" r="0.9" stroke="#687078" stroke-width="0.72" fill="none"/><polygon points="1073,26.6 1073,35 1079.8,30.8" fill="#414750"/><rect x="1186.7" y="20.7" width="11.6" height="10.6" stroke="#687078" stroke-width="1.5" fill="none"/><polygon points="1190.3,23 1190.3,29 1195.4,26" fill="#687078"/><path d="M1244 23.2 H1249 M1250.8 24.8 C1250.8 27.6 1247 28.6 1244.2 28.9" stroke="#16191f" stroke-width="1.2" fill="none" /><circle cx="1242.3" cy="23.2" r="1.55" stroke="#16191f" stroke-width="1.5" fill="#fff"/><circle cx="1250.8" cy="23.2" r="1.55" stroke="#16191f" stroke-width="1.5" fill="#fff"/><circle cx="1242.3" cy="29" r="1.55" stroke="#16191f" stroke-width="1.5" fill="#fff"/><circle cx="1288.3" cy="26" r="1.4" stroke="none" stroke-width="1" fill="#414750"/><circle cx="1293.2" cy="26" r="1.4" stroke="none" stroke-width="1" fill="#414750"/><circle cx="1298.1" cy="26" r="1.4" stroke="none" stroke-width="1" fill="#414750"/><circle cx="1347.8" cy="13.5" r="5.6" stroke="#414750" stroke-width="1.2" fill="none"/><rect x="1347.1" y="12.6" width="1.5" height="4" fill="#414750"/><circle cx="1347.8" cy="10.7" r="0.95" stroke="none" stroke-width="1" fill="#414750"/><rect x="1346.2" y="16.1" width="3.2" height="0.9" fill="#414750"/><rect x="1346.4" y="12.6" width="1.4" height="0.8" fill="#414750"/><path d="M81 75.6 H86.4 a4.15 4.15 0 0 1 0 8.3 H77.2" stroke="#16191f" stroke-width="2" fill="none" stroke-linecap="round"/><polygon points="75.6,75.6 81.6,71.6 81.6,79.6" fill="#16191f"/><g transform="translate(193.85 0) scale(-1 1)"><path d="M81 75.6 H86.4 a4.15 4.15 0 0 1 0 8.3 H77.2" stroke="#c2c6c7" stroke-width="2" fill="none" stroke-linecap="round"/><polygon points="75.6,75.6 81.6,71.6 81.6,79.6" fill="#c2c6c7"/></g><path d="M141.2 73 H154.7 L149.7 79.2 V84.4 L146.4 85.9 V79.2 Z" stroke="#16191f" stroke-width="1.6" fill="none" stroke-linejoin="miter"/><rect x="175.3" y="75.7" width="1.2" height="10.4" fill="#6a6f75"/><rect x="179.4" y="75.7" width="1.2" height="10.4" fill="#6a6f75"/><rect x="183.5" y="75.7" width="1.2" height="10.4" fill="#6a6f75"/><rect x="187.6" y="75.7" width="1.2" height="10.4" fill="#6a6f75"/><rect x="175.3" y="75" width="13.5" height="1.4" fill="#16191f"/><rect x="175.3" y="85.4" width="13.5" height="1.4" fill="#16191f"/><rect x="221" y="86" width="14" height="1" fill="#bec3c4"/><rect x="254" y="86" width="14" height="1" fill="#bec3c4"/><path d="M263.5 72.9 V77.7 M261.1 75.3 H265.9" stroke="#bec3c4" stroke-width="1.1" fill="none" /><polygon points="266,79.4 267.5,81 266,82.6 264.5,81" fill="#bec3c4"/><rect x="291" y="74.4" width="8" height="1.4" fill="#bec3c4"/><rect x="288" y="85.4" width="4.8" height="1.4" fill="#bec3c4"/><rect x="297.2" y="85.4" width="4.8" height="1.4" fill="#bec3c4"/><rect x="294.4" y="79.5" width="1.3" height="6.6" fill="#bec3c4"/><polygon points="295,76.8 298.2,80.9 291.8,80.9" fill="#bec3c4"/><rect x="335.7" y="73.7" width="12.6" height="12.6" stroke="#16191f" stroke-width="1.4" fill="none"/><path d="M338.3 77.5 H347.3 M338.3 81.8 H347.3" stroke="#16191f" stroke-width="0.9" fill="none" stroke-dasharray="0.9 0.9"/><path d="M338.5 79.2 V80.1 M346.9 79.2 V80.1" stroke="#16191f" stroke-width="0.9" fill="none" /><rect x="371.7" y="73.7" width="12.6" height="12.6" stroke="#16191f" stroke-width="1.4" fill="none"/><path d="M374.4 78.8 V77.6 H382.8 V80.6 H379.4" stroke="#16191f" stroke-width="1" fill="none" /><path d="M375.3 79.6 L377.3 81.4 M377.3 79.6 L375.3 81.4 M374.6 80.6 H378" stroke="#16191f" stroke-width="0.7" fill="none" /><rect x="414.7" y="73.7" width="12.6" height="12.6" stroke="#16191f" stroke-width="1.4" fill="none"/><rect x="419.3" y="77.6" width="6.6" height="2.9" stroke="#16191f" stroke-width="0.9" fill="#fff" rx="0.7"/><rect x="416.8" y="79.6" width="6.8" height="2.9" stroke="#16191f" stroke-width="0.9" fill="#fff" rx="0.7"/><rect x="462.9" y="75.8" width="11.8" height="10.1" stroke="#bec3c4" stroke-width="1.2" fill="none"/><path d="M468.4 75.8 V85.9 M469.4 75.8 V85.9" stroke="#bec3c4" stroke-width="0.6" fill="none" /><path d="M465.3 81 H467.6 M470.2 81 H472.5" stroke="#bec3c4" stroke-width="0.8" fill="none" /><polygon points="464.3,81 466.6,79.2 466.6,82.8" fill="#bec3c4"/><polygon points="473.5,81 471.2,79.2 471.2,82.8" fill="#bec3c4"/><rect x="491.1" y="75.8" width="11.8" height="10.1" stroke="#2c3138" stroke-width="1.4" fill="none"/><path d="M491.4 81 H494 M500 81 H502.6" stroke="#16191f" stroke-width="1" fill="none" /><polygon points="495.9,81 493.2,79 493.2,83" fill="#16191f"/><polygon points="498.1,81 500.8,79 500.8,83" fill="#16191f"/><rect x="521.4" y="75.9" width="1.2" height="10.5" fill="#5a5f66"/><rect x="525.3" y="75.9" width="1.2" height="10.5" fill="#5a5f66"/><rect x="529.2" y="75.9" width="1.2" height="10.5" fill="#5a5f66"/><rect x="533.1" y="75.9" width="1.2" height="10.5" fill="#5a5f66"/><rect x="521.4" y="75.25" width="12.9" height="1.3" fill="#4a4f57"/><rect x="521.4" y="85.75" width="12.9" height="1.3" fill="#4a4f57"/><circle cx="532.6" cy="76.4" r="3.3" stroke="#16191f" stroke-width="1" fill="#fff"/><path d="M532.6 74.4 V78.4 M530.6 76.4 H534.6" stroke="#16191f" stroke-width="0.9" fill="none" /><rect x="624.8" y="73.9" width="3.6" height="12.3" stroke="#bec3c4" stroke-width="1.3" fill="none"/><path d="M624.8 78 H628.4 M624.8 82.1 H628.4" stroke="#bec3c4" stroke-width="1" fill="none" /><path d="M629.4 80 H631.4" stroke="#bec3c4" stroke-width="1" fill="none" /><polygon points="633.4,80 630.9,78 630.9,82" fill="#bec3c4"/><rect x="635.2" y="73.6" width="3" height="3" fill="#bec3c4"/><rect x="635.2" y="78.6" width="3" height="3" fill="#bec3c4"/><rect x="635.2" y="83.6" width="3" height="3" fill="#bec3c4"/><rect x="655.7" y="73.7" width="12.6" height="12.6" stroke="#16191f" stroke-width="1.4" fill="none"/><rect x="657.6" y="75.5" width="8.8" height="1.9" fill="#16191f"/><rect x="657.6" y="78.5" width="1.9" height="6.3" fill="#16191f"/><path d="M661 83.7 C663.8 83.7 665.2 82.4 665.2 80.4" stroke="#16191f" stroke-width="1.3" fill="none" /><polygon points="665.2,78 667.2,81 663.2,81" fill="#16191f"/><rect x="685.7" y="73.7" width="12.6" height="12.6" stroke="#16191f" stroke-width="1.4" fill="none"/><rect x="713.6" y="73.6" width="3.5" height="12.6" stroke="#16191f" stroke-width="1.2" fill="none"/><rect x="722.8" y="73.6" width="3.5" height="12.6" stroke="#16191f" stroke-width="1.2" fill="none"/><path d="M720 80 H722.5" stroke="#16191f" stroke-width="0.9" fill="none" /><polygon points="718.7,80 720.6,78.5 720.6,81.5" fill="#16191f"/><rect x="740.8" y="73.6" width="12.6" height="3.6" stroke="#16191f" stroke-width="1.2" fill="none"/><rect x="740.8" y="82.6" width="12.6" height="3.6" stroke="#16191f" stroke-width="1.2" fill="none"/><path d="M747.1 80 V82.3" stroke="#16191f" stroke-width="0.9" fill="none" /><polygon points="747.1,78.3 748.7,80.4 745.5,80.4" fill="#16191f"/><rect x="777.8" y="74.7" width="12.3" height="12.4" stroke="#bec3c4" stroke-width="1" fill="none"/><circle cx="788" cy="76.8" r="3" stroke="#bec3c4" stroke-width="0.9" fill="#fff"/><circle cx="788" cy="76.8" r="0.9" stroke="#bec3c4" stroke-width="0.7" fill="none"/><path d="M788 73.2 V74 M788 79.6 V80.4 M784.4 76.8 H785.2 M790.8 76.8 H791.6 M785.5 74.3 L786 74.8 M790 78.8 L790.5 79.3 M785.5 79.3 L786 78.8 M790 74.8 L790.5 74.3" stroke="#bec3c4" stroke-width="0.9" fill="none" /><rect x="804.9" y="73.9" width="12.3" height="12.1" stroke="#16191f" stroke-width="1.5" fill="none"/><rect x="807.3" y="76.7" width="1.6" height="8.3" fill="#16191f"/><rect x="809.55" y="78.6" width="1.6" height="6.4" fill="#16191f"/><rect x="811.8" y="80.6" width="1.6" height="4.4" fill="#16191f"/><rect x="814.05" y="82.6" width="1.6" height="2.4" fill="#16191f"/><rect x="838.8" y="74.7" width="12.3" height="12.4" stroke="#bec3c4" stroke-width="1" fill="none"/><polygon points="843.2,76.2 846.2,80.6 840.2,80.6" fill="#bec3c4"/><polygon points="846.9,76.6 849.9,76.6 848.4,78.4" fill="#bec3c4"/><rect x="840.6" y="81.8" width="3.8" height="3.8" fill="#bec3c4"/><circle cx="847.8" cy="83.7" r="2.2" stroke="none" stroke-width="1" fill="#bec3c4"/><rect x="875.8" y="73.8" width="12.3" height="12.3" stroke="#bec3c4" stroke-width="1" fill="none"/><rect x="1283.7" y="76.6" width="11.6" height="11.6" stroke="#16191f" stroke-width="1.4" fill="none"/><rect x="1286" y="79.6" width="7" height="1.2" fill="#3a3f46"/><rect x="1286" y="82" width="7" height="1.2" fill="#3a3f46"/><rect x="1286" y="84.4" width="7" height="1.2" fill="#3a3f46"/><circle cx="1308.4" cy="81.8" r="8.4" stroke="none" stroke-width="1" fill="#0073bb"/><path d="M61.6 129.4 Q67.45 122.4 73.3 129.4 Q67.45 136.4 61.6 129.4 Z" stroke="#545b64" stroke-width="1.4" fill="none" /><circle cx="67.45" cy="129.4" r="2.2" stroke="none" stroke-width="1" fill="#545b64"/><polygon points="196.5,127 204.4,127 200.45,132.8" fill="#0073bb"/><path d="M508.78 117.34 L513.36 122.53 M514.9399999999999 117.34 L510.35999999999996 122.53 M514.9399999999999 117.34 q0.97 0.26 0.44 1.32" stroke="#fff" stroke-width="0.85" fill="none" /><circle cx="509.57" cy="123.41" r="1.01" stroke="#fff" stroke-width="0.85" fill="none"/><circle cx="514.15" cy="123.24" r="0.88" stroke="#fff" stroke-width="0.85" fill="none"/><circle cx="511.86" cy="123.85" r="0.79" stroke="#fff" stroke-width="0.68" fill="none"/><rect x="782.5" y="123" width="13.8" height="13" fill="#16191f" rx="0.4"/><rect x="784" y="126.6" width="2.9" height="1.9" fill="#fff"/><rect x="784" y="129.8" width="2.9" height="1.9" fill="#fff"/><rect x="784" y="133" width="2.9" height="1.9" fill="#fff"/><rect x="788.2" y="126.6" width="2.9" height="1.9" fill="#fff"/><rect x="788.2" y="129.8" width="2.9" height="1.9" fill="#fff"/><rect x="788.2" y="133" width="2.9" height="1.9" fill="#fff"/><rect x="792.4" y="126.6" width="2.9" height="1.9" fill="#fff"/><rect x="792.4" y="129.8" width="2.9" height="1.9" fill="#fff"/><rect x="792.4" y="133" width="2.9" height="1.9" fill="#fff"/><rect x="853.05" y="123.6" width="1.1" height="10.9" fill="#6a7077"/><rect x="857.283" y="123.6" width="1.1" height="10.9" fill="#6a7077"/><rect x="861.517" y="123.6" width="1.1" height="10.9" fill="#6a7077"/><rect x="865.75" y="123.6" width="1.1" height="10.9" fill="#6a7077"/><rect x="853.05" y="123.05" width="13.8" height="1.1" fill="#5a6068"/><rect x="853.05" y="133.95" width="13.8" height="1.1" fill="#5a6068"/><rect x="937.6" y="127" width="1.6" height="7" fill="#5f666e"/><rect x="940.4" y="129" width="1.6" height="5" fill="#5f666e"/><rect x="943.2" y="127.8" width="1.6" height="6.2" fill="#5f666e"/><rect x="946" y="130" width="1.6" height="4" fill="#5f666e"/><path d="M937.2 124.6 L939 122.8 L941.5 125.6 L943.8 123.6 L947 126.8" stroke="#5f666e" stroke-width="0.6" fill="none" /><path d="M123.5 160.1 L122.4 168.7 M126.9 160.1 L125.8 168.7 M120.8 163 H129.0 M120.3 166 H128.5" stroke="#33383f" stroke-width="1.25" fill="none" /><path d="M363.5 160.1 L362.4 168.7 M366.9 160.1 L365.8 168.7 M360.8 163 H369.0 M360.3 166 H368.5" stroke="#33383f" stroke-width="1.25" fill="none" /><path d="M843.4 160.1 L842.3000000000001 168.7 M846.8000000000001 160.1 L845.7 168.7 M840.7 163 H848.9 M840.2 166 H848.4" stroke="#33383f" stroke-width="1.25" fill="none" /><path d="M1304 128.7 L1313.6 138.29999999999998 M1313.6 128.7 L1304 138.29999999999998" stroke="#414750" stroke-width="1.5" fill="none" /><path d="M1223 282.6 L1232 291.6 M1232 282.6 L1223 291.6" stroke="#414750" stroke-width="1.4" fill="none" /><path d="M1223 300.6 L1232 309.6 M1232 300.6 L1223 309.6" stroke="#414750" stroke-width="1.4" fill="none" /><rect x="1030.8" y="283.2" width="1.7" height="1.7" fill="#879596"/><rect x="1034.1" y="283.2" width="1.7" height="1.7" fill="#879596"/><rect x="1030.8" y="286.1" width="1.7" height="1.7" fill="#879596"/><rect x="1034.1" y="286.1" width="1.7" height="1.7" fill="#879596"/><rect x="1030.8" y="289" width="1.7" height="1.7" fill="#879596"/><rect x="1034.1" y="289" width="1.7" height="1.7" fill="#879596"/><rect x="1030.8" y="301.2" width="1.7" height="1.7" fill="#879596"/><rect x="1034.1" y="301.2" width="1.7" height="1.7" fill="#879596"/><rect x="1030.8" y="304.1" width="1.7" height="1.7" fill="#879596"/><rect x="1034.1" y="304.1" width="1.7" height="1.7" fill="#879596"/><rect x="1030.8" y="307" width="1.7" height="1.7" fill="#879596"/><rect x="1034.1" y="307" width="1.7" height="1.7" fill="#879596"/><polygon points="1220.3,323.6 1228.7,323.6 1224.5,329.9" fill="#414750"/><path d="M1036.6 542.3 Q1042.5 536.3 1048.4 542.3 Q1042.5 548.3 1036.6 542.3 Z" stroke="#16191f" stroke-width="1.3" fill="none" /><circle cx="1042.5" cy="542.3" r="2.1" stroke="none" stroke-width="1" fill="#16191f"/><polygon points="303.8,753.6 312,753.6 307.9,759.8" fill="#414750"/></svg>
<span style="left:220.99px;top:70px;font-size:13px;line-height:17px;color:#bec3c4;font-weight:700;transform:matrix(0.8242,0.0005,0,1,0,0.80);">Aa</span>
<span style="left:253.75px;top:70px;font-size:13px;line-height:17px;color:#bec3c4;font-weight:700;transform:matrix(1.0000,0.0005,0,1,0,0.80);">A</span>
<span style="left:1305.35px;top:75px;font-size:9.6px;line-height:13px;color:#fff;font-weight:700;transform:matrix(1.0000,0.0005,0,1,0,0.30);">3</span>
<span style="left:572.15px;top:69px;font-size:17px;line-height:21px;color:#16191f;font-weight:700;transform:matrix(1.0000,0.0005,0,1,0,0.80);">Σ</span>
<span style="left:687.70px;top:73px;font-size:11.6px;line-height:14px;color:#16191f;font-weight:700;transform:matrix(1.0000,0.0005,0,1,0,0.20);">Σ</span>
<span style="left:779.3px;top:80.6px;font-size:4.6px;line-height:6px;font-weight:700;color:#bec3c4">ABC</span>
<span style="left:877.6px;top:75.2px;font-size:5px;line-height:5.2px;font-weight:700;color:#bec3c4;white-space:pre">010
101</span>
</div>
</body></html>
